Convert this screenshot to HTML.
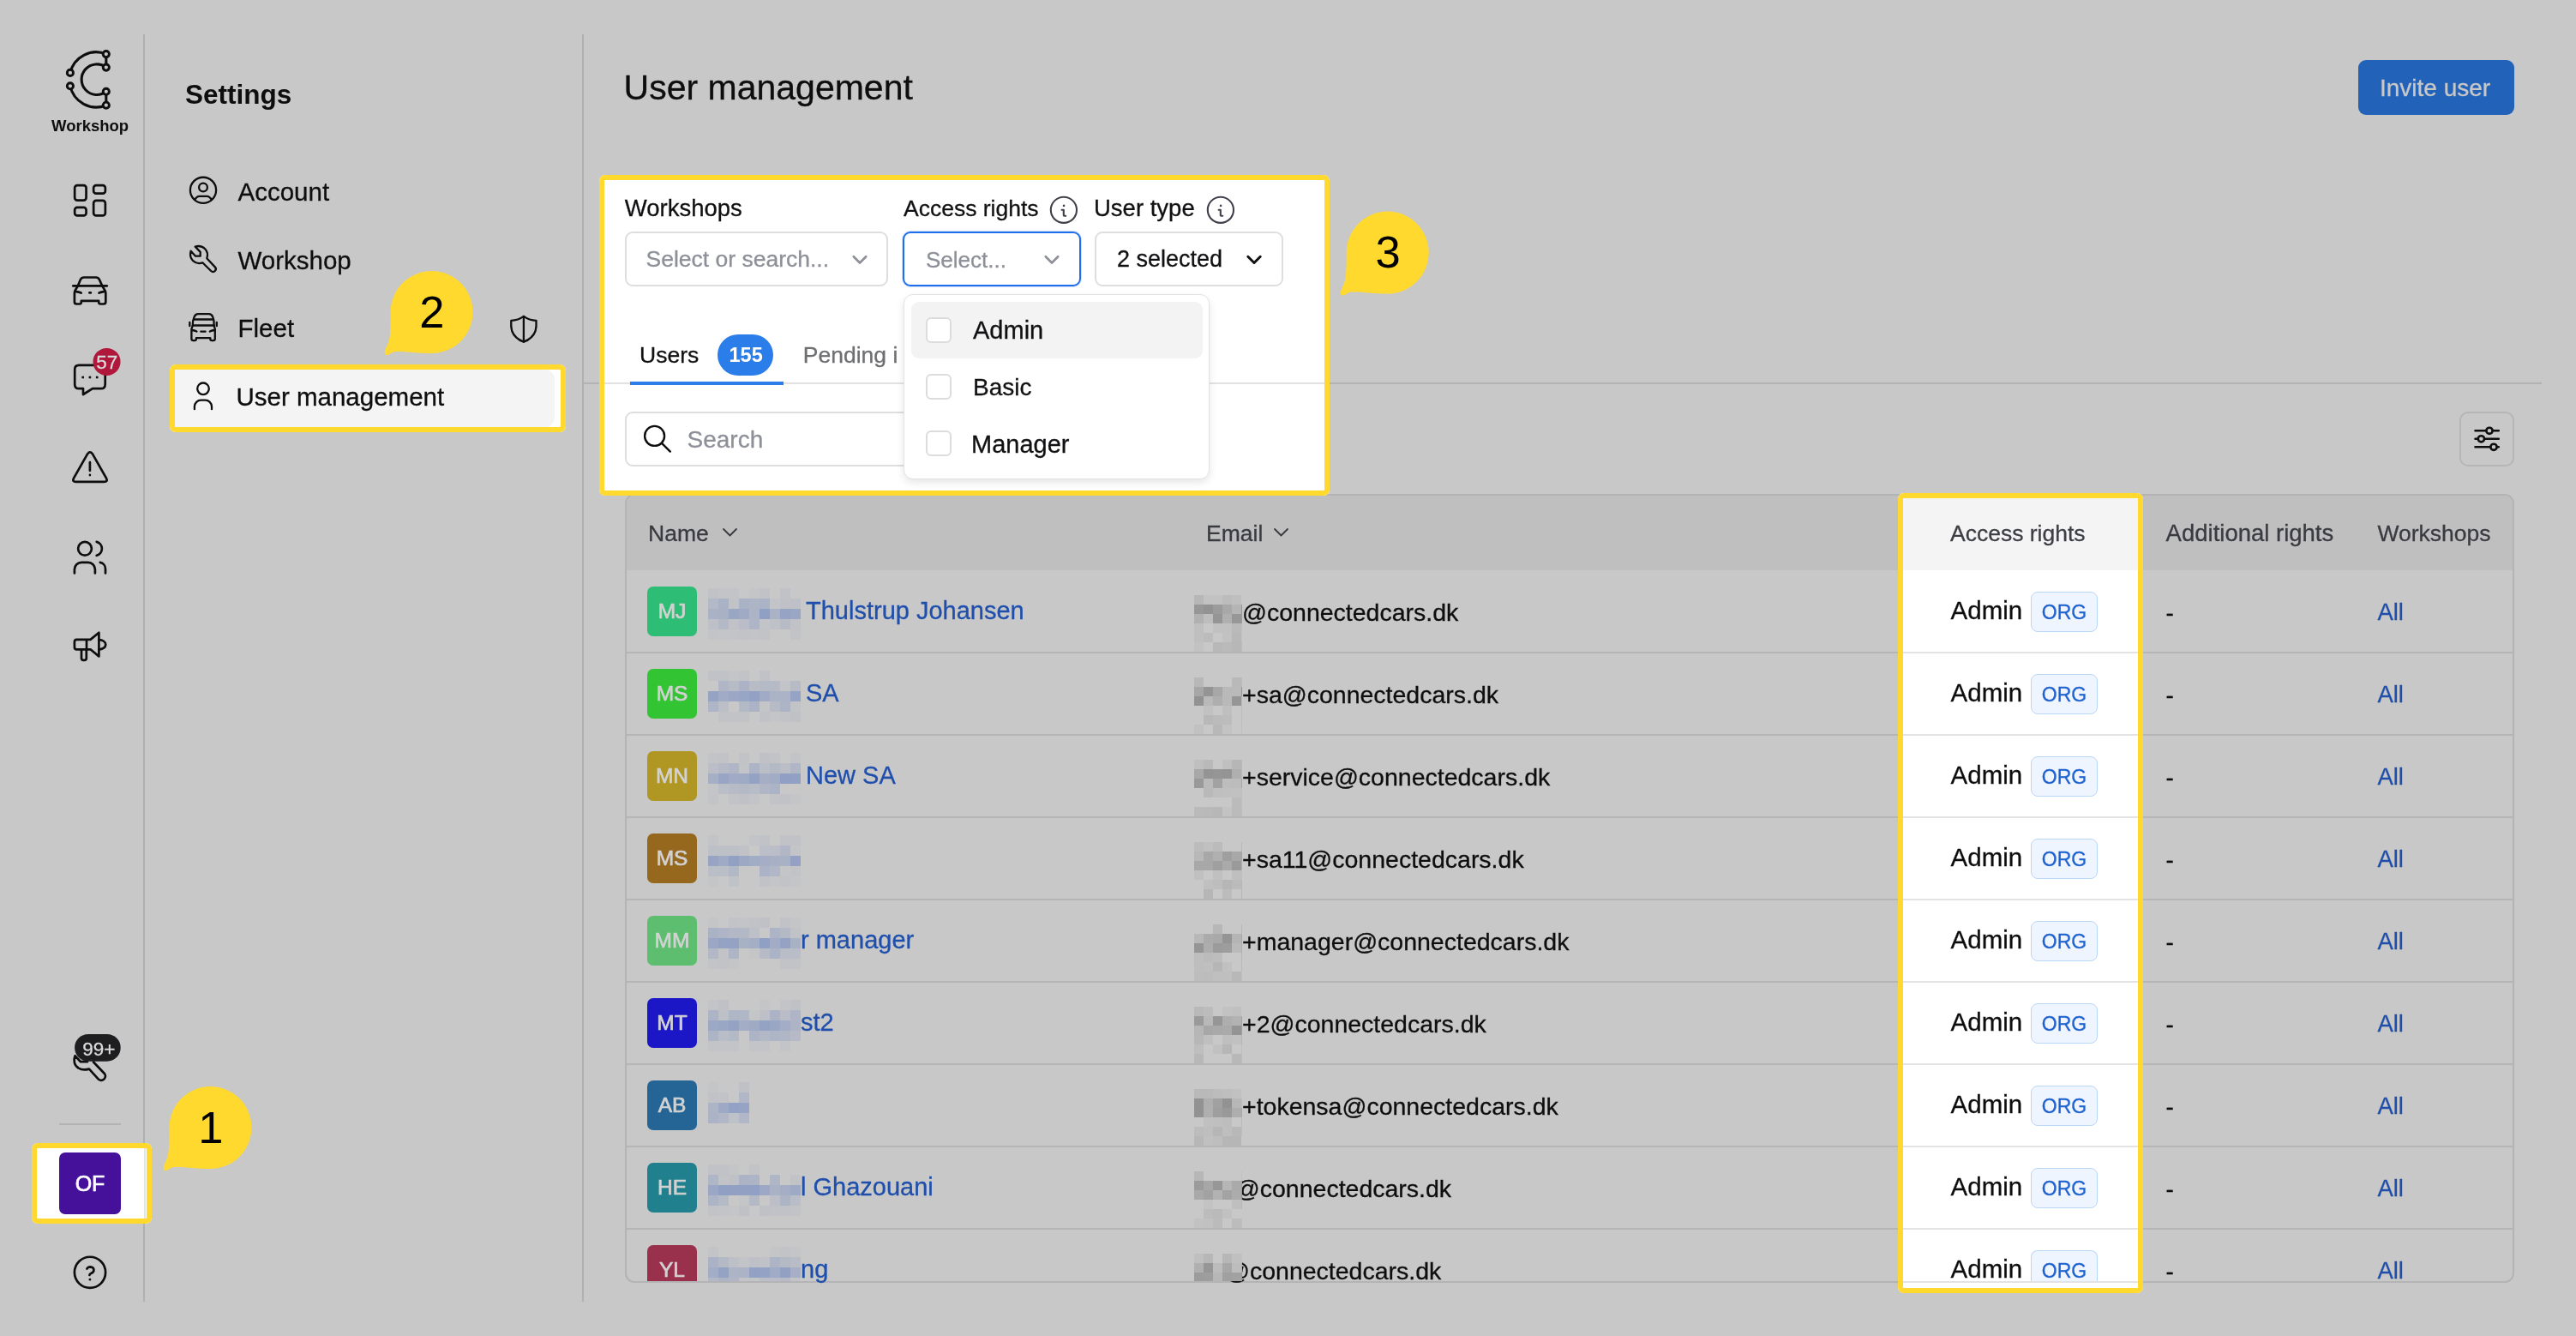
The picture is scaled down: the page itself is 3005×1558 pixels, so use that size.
<!DOCTYPE html>
<html><head><meta charset="utf-8"><title>User management</title>
<style>
html,body{margin:0;padding:0;width:3005px;height:1558px;overflow:hidden;background:#c8c8c8;}
body{position:relative;font-family:"Liberation Sans",sans-serif;}
.a{position:absolute;}
.t{position:absolute;white-space:nowrap;line-height:1;-webkit-text-stroke:0.3px currentColor;}
.s{position:absolute;overflow:visible;}
</style></head><body>
<div id="root" style="position:absolute;left:0;top:0;width:3005px;height:1558px;will-change:transform"><div class="a" style="left:167px;top:40px;width:2px;height:1478px;background:#b1b1b4"></div>
<div class="a" style="left:679px;top:40px;width:2px;height:1478px;background:#b1b1b4"></div>
<svg class="s" style="left:0px;top:0px" width="170" height="170" viewBox="0 0 170 170" ><g fill="none" stroke="#0e0e0f" stroke-width="3.1" stroke-linecap="round">
<path d="M81.9 84.9 A31 31 0 0 1 123.8 63.1"/>
<path d="M81.9 100.3 A31 31 0 0 0 123.8 122.7"/>
<path d="M123.8 78.6 A17.8 17.8 0 1 0 123.8 106.8"/>
<path d="M123.8 63.1 V78.6 M123.8 106.8 V122.7"/>
</g>
<g fill="#c8c8c8" stroke="#0e0e0f" stroke-width="2.9">
<circle cx="81.9" cy="84.9" r="3.6"/><circle cx="81.9" cy="100.3" r="3.6"/>
<circle cx="123.8" cy="63.1" r="3.6"/><circle cx="123.8" cy="78.6" r="3.6"/>
<circle cx="123.8" cy="106.8" r="3.6"/><circle cx="123.8" cy="122.7" r="3.6"/>
</g></svg>
<div class="t" style="left:60.0px;top:138.0px;font-size:18.5px;color:#0e0e0f;font-weight:700;-webkit-text-stroke:0">Workshop</div>
<svg class="s" style="left:75px;top:205px" width="60" height="60" viewBox="0 0 60 60" ><g fill="none" stroke="#0e0e0f" stroke-width="2.7" stroke-linecap="round" stroke-linejoin="round"><rect x="12.15" y="11.05" width="13.4" height="17.5" rx="3"/><rect x="34.15" y="11.05" width="13.7" height="9.6" rx="3"/><rect x="12.15" y="36.85" width="13.4" height="9.6" rx="3"/><rect x="34.15" y="28.95" width="13.7" height="17.5" rx="3"/></g></svg>
<svg class="s" style="left:75px;top:310px" width="60" height="60" viewBox="0 0 60 60" ><g fill="none" stroke="#0e0e0f" stroke-width="2.7" stroke-linecap="round" stroke-linejoin="round"><path d="M10.3 23.4 H49.7"/><path d="M15.8 23.4 L19 15.8 Q20.2 13.5 22.8 13.5 H37 Q39.6 13.5 40.8 15.8 L44.2 23.4"/><path d="M15.8 23.4 L12.8 28.5 Q11.9 30 11.9 32 V42 Q11.9 44.5 14.4 44.5 H17.6 Q19.8 44.5 19.8 42.3 V40.9 H40.2 V42.3 Q40.2 44.5 42.4 44.5 H45.8 Q48.3 44.5 48.3 42 V32 Q48.3 30 47.3 28.5 L44.2 23.4"/><path d="M14 30.2 Q17 30.4 19.6 31.6"/><path d="M46.2 30.2 Q43.2 30.4 40.6 31.6"/><path d="M29.4 31.4 H30.8"/></g></svg>
<svg class="s" style="left:75px;top:400px" width="70" height="70" viewBox="0 0 70 70" ><g fill="none" stroke="#0e0e0f" stroke-width="2.7" stroke-linecap="round" stroke-linejoin="round" stroke-width="3"><path d="M17.2 25.9 H42.7 Q47.7 25.9 47.7 30.9 V48.2 Q47.7 53.2 42.7 53.2 H33 L22 60 V53.2 H17.2 Q12.2 53.2 12.2 48.2 V30.9 Q12.2 25.9 17.2 25.9 Z"/></g><g fill="#0e0e0f"><rect x="20.4" y="38.7" width="2.6" height="2.6"/><rect x="28.6" y="38.7" width="2.6" height="2.6"/><rect x="36.9" y="38.7" width="2.6" height="2.6"/></g><circle cx="49.5" cy="21.9" r="16" fill="#b0173a"/></svg>
<div class="t" style="left:112.3px;top:412.2px;font-size:22.5px;color:#d6dcdc;font-weight:400;">57</div>
<svg class="s" style="left:75px;top:515px" width="60" height="60" viewBox="0 0 60 60" ><g fill="none" stroke="#0e0e0f" stroke-width="2.7" stroke-linecap="round" stroke-linejoin="round"><path d="M27.2 14.2 Q30 10.5 32.8 14.2 L49 42.6 Q51 46.9 46.5 46.9 H13.5 Q9 46.9 11 42.6 Z"/><path d="M29.9 24.2 V33.8"/><path d="M29.9 38.9 V39.1"/></g></svg>
<svg class="s" style="left:75px;top:620px" width="60" height="60" viewBox="0 0 60 60" ><g fill="none" stroke="#0e0e0f" stroke-width="2.7" stroke-linecap="round" stroke-linejoin="round"><circle cx="24" cy="19.8" r="7.9"/><path d="M37.7 11.9 A8.2 8.2 0 0 1 37.7 27.8"/><path d="M11.9 48.5 V44 A8.2 8.2 0 0 1 20.1 35.8 H27.7 A8.2 8.2 0 0 1 35.9 44 V48.5"/><path d="M41.8 35.9 A7.5 7.5 0 0 1 48 43.4 V48.5"/></g></svg>
<svg class="s" style="left:75px;top:725px" width="60" height="60" viewBox="0 0 60 60" ><g fill="none" stroke="#0e0e0f" stroke-width="2.7" stroke-linecap="round" stroke-linejoin="round"><path d="M26 20.9 H30.5 L40.4 12.8 V40.4 L30.5 32.3 H14.5 Q11.9 32.3 11.9 29.7 V23.5 Q11.9 20.9 14.5 20.9 H26 V32.3"/><path d="M20 32.3 V42.6 Q20 44.9 22.3 44.9 H23.5 Q25.8 44.9 25.8 42.6 V32.3"/><path d="M40.4 21.1 A7.9 5.6 0 0 1 40.4 32.3"/></g></svg>
<svg class="s" style="left:75px;top:1195px" width="80" height="80" viewBox="0 0 80 80" ><g fill="none" stroke="#0e0e0f" stroke-width="2.7" stroke-linecap="round" stroke-linejoin="round"><path d="M12.5 36.3 L19.1 43.2 H27 M12.5 36.3 C10.5 41.5 11.5 47.5 16.5 50.5 C19.5 52.5 24 53 29 51.6 L40.1 63.8 A4.85 4.85 0 0 0 46.9 57 L34 43.5"/></g><rect x="12.1" y="10.9" width="53.6" height="31.8" rx="15.9" fill="#1e1e20"/></svg>
<div class="t" style="left:96.3px;top:1213.2px;font-size:22.5px;color:#dcdcdc;font-weight:400;">99+</div>
<div class="a" style="left:69px;top:1310px;width:72px;height:2px;background:#b3b3b5"></div>
<div class="a" style="left:37px;top:1333px;width:140px;height:94px;background:#ffffff;border-radius:7px;box-shadow:inset 0 0 0 6px #ffd92e"></div>
<div class="a" style="left:168px;top:1339px;width:2px;height:82px;background:#e4e4e4"></div>
<div class="a" style="left:69px;top:1344px;width:72px;height:72px;background:#46119a;border-radius:7px"></div>
<div class="t" style="left:69.0px;top:1367.8px;font-size:25px;color:#ffffff;font-weight:400;width:72px;text-align:center;-webkit-text-stroke:0.7px #fff">OF</div>
<svg class="s" style="left:75px;top:1455px" width="60" height="60" viewBox="0 0 60 60" ><g fill="none" stroke="#0e0e0f" stroke-width="2.7" stroke-linecap="round" stroke-linejoin="round"><circle cx="30" cy="28.85" r="18.1"/><path d="M26.4 24.6 Q27.6 22.4 30.4 22.4 Q34.4 22.6 34.4 26.2 Q34.4 28.6 31.6 29.8 Q29.4 30.8 29.4 32"/><path d="M29.9 37 V37.2"/></g></svg>
<div class="t" style="left:216.0px;top:95.3px;font-size:31.5px;color:#0e0e0f;font-weight:700;-webkit-text-stroke:0">Settings</div>
<svg class="s" style="left:210px;top:195px" width="55" height="55" viewBox="0 0 55 55" ><g fill="none" stroke="#0e0e0f" stroke-width="2.3" stroke-linecap="round" stroke-linejoin="round"><circle cx="27" cy="26.85" r="15.1"/><circle cx="27" cy="23.5" r="4.9"/><path d="M17.1 37.6 L19.6 35 Q21 33.8 22.8 33.8 H31.2 Q33 33.8 34.4 35 L36.9 37.6"/></g></svg>
<div class="t" style="left:277.5px;top:209.0px;font-size:29.5px;color:#0e0e0f;font-weight:400;">Account</div>
<svg class="s" style="left:210px;top:275px" width="55" height="55" viewBox="0 0 55 55" ><g fill="none" stroke="#0e0e0f" stroke-width="2.3" stroke-linecap="round" stroke-linejoin="round"><path d="M17.7 12.6 L23.7 18.9 V23.7 H18.1 L12.6 17.7 Q10.6 24.5 15.2 29.2 Q19.8 33.5 26.3 31.3 L36.2 41 Q38.6 43.2 40.8 41 Q43 38.8 40.8 36.4 L31.3 26.3 Q33.5 19.8 29.2 15.2 Q24.5 10.6 17.7 12.6 Z"/></g></svg>
<div class="t" style="left:277.5px;top:289.0px;font-size:29.5px;color:#0e0e0f;font-weight:400;">Workshop</div>
<svg class="s" style="left:210px;top:355px" width="55" height="55" viewBox="0 0 55 55" ><g fill="none" stroke="#0e0e0f" stroke-width="2.3" stroke-linecap="round" stroke-linejoin="round"><path d="M16.5 17.5 H38.3 M15.2 24.5 H39.5"/><path d="M14.8 24.5 Q14.6 19 16.6 14.5 Q18 11.1 21 11.1 H33.8 Q36.8 11.1 38.2 14.5 Q40.2 19 39.6 24.5"/><path d="M11.3 20.8 V25.2 M42.8 20.8 V25.2"/><path d="M14.8 24.5 L13.4 28.6 V40 Q13.4 42.1 15.5 42.1 H17 Q18.9 42.1 18.9 40.2 V39.1 H35.3 V40.2 Q35.3 42.1 37.2 42.1 H38.7 Q40.8 42.1 40.8 40 V28.6 L39.6 24.5"/><path d="M14 30 Q17 30.3 19.4 31.6 M40.2 30 Q37.2 30.3 34.8 31.6 M24.3 31.7 H29.6"/></g></svg>
<div class="t" style="left:277.5px;top:368.0px;font-size:29.5px;color:#0e0e0f;font-weight:400;">Fleet</div>
<svg class="s" style="left:585px;top:357px" width="55" height="55" viewBox="0 0 55 55" ><g fill="none" stroke="#0e0e0f" stroke-width="2.3" stroke-linecap="round" stroke-linejoin="round"><path d="M25.9 11.9 Q19.5 16.5 11.3 16.9 Q10.8 24 12.2 29 Q15.5 37.8 25.9 41.7 Q36.3 37.8 39.6 29 Q41 24 40.5 16.9 Q32.3 16.5 25.9 11.9 Z"/><path d="M25.9 11.9 V41.7"/></g></svg>
<div class="a" style="left:198px;top:425px;width:462px;height:79px;background:#ffffff;border-radius:7px;box-shadow:inset 0 0 0 6px #ffd92e"></div>
<div class="a" style="left:204px;top:431px;width:443px;height:67px;background:#f4f4f4;border-radius:0 11px 11px 0"></div>
<svg class="s" style="left:210px;top:435px" width="55" height="55" viewBox="0 0 55 55" ><g fill="none" stroke="#0e0e0f" stroke-width="2.3" stroke-linecap="round" stroke-linejoin="round"><circle cx="27" cy="18.3" r="6.8"/><path d="M16.9 42.2 V39 A7.5 7.5 0 0 1 24.4 31.7 H29.5 A7.5 7.5 0 0 1 37 39 V42.2"/></g></svg>
<div class="t" style="left:275.5px;top:448.0px;font-size:29.5px;color:#0e0e0f;font-weight:400;">User management</div>
<div class="a" style="left:2869px;top:480px;width:64px;height:64px;border:2px solid #b6b6b8;border-radius:10px;box-sizing:border-box"></div>
<svg class="s" style="left:2820px;top:430px" width="185" height="170" viewBox="0 0 185 170" ><g fill="none" stroke="#0e0e0f" stroke-width="2.6" stroke-linecap="round"><path d="M67.5 72.3 H94.8 M67.5 81.8 H94.8 M67.5 91.3 H94.8"/></g><g fill="#c8c8c8" stroke="#0e0e0f" stroke-width="2.6"><circle cx="84" cy="72.3" r="3.6"/><circle cx="74.4" cy="81.8" r="3.6"/><circle cx="89" cy="91.3" r="3.6"/></g></svg>
<div class="a" style="left:729px;top:576px;width:2204px;height:920px;border:2px solid #b4b4b6;border-radius:11px;box-sizing:border-box;overflow:hidden"></div>
<div class="a" style="left:731px;top:578px;width:2200px;height:87px;background:#bfbfc0;border-radius:9px 9px 0 0"></div>
<div class="t" style="left:756.0px;top:608.9px;font-size:26.5px;color:#3a3b40;font-weight:400;">Name</div>
<svg class="s" style="left:841px;top:613px" width="24" height="16" viewBox="0 0 24 16" ><path d="M3 4 L10.5 11.5 L18 4" fill="none" stroke="#3a3b40" stroke-width="1.8" stroke-linecap="round" stroke-linejoin="round"/></svg>
<div class="t" style="left:1407.0px;top:608.6px;font-size:26.5px;color:#3a3b40;font-weight:400;">Email</div>
<svg class="s" style="left:1484px;top:613px" width="24" height="16" viewBox="0 0 24 16" ><path d="M3 4 L10.5 11.5 L18 4" fill="none" stroke="#3a3b40" stroke-width="1.8" stroke-linecap="round" stroke-linejoin="round"/></svg>
<div class="t" style="left:2526.6px;top:607.7px;font-size:27.5px;color:#3a3b40;font-weight:400;">Additional rights</div>
<div class="t" style="left:2773.4px;top:608.6px;font-size:26.5px;color:#3a3b40;font-weight:400;">Workshops</div>
<div class="a" style="left:755px;top:684px;width:58px;height:58px;background:#2ebd74;border-radius:7px"></div>
<div class="t" style="left:755.0px;top:701.1px;font-size:24.5px;color:#d2d2d2;font-weight:400;width:58px;text-align:center;-webkit-text-stroke:0.7px #d2d2d2">MJ</div>
<div class="a" style="left:826px;top:686px;width:12px;height:12px;background:rgb(193,194,199)"></div>
<div class="a" style="left:826px;top:698px;width:12px;height:12px;background:rgb(179,185,198)"></div>
<div class="a" style="left:826px;top:710px;width:12px;height:12px;background:rgb(170,178,198)"></div>
<div class="a" style="left:826px;top:722px;width:12px;height:12px;background:rgb(189,192,199)"></div>
<div class="a" style="left:826px;top:734px;width:12px;height:12px;background:rgb(195,196,199)"></div>
<div class="a" style="left:838px;top:686px;width:12px;height:12px;background:rgb(195,196,199)"></div>
<div class="a" style="left:838px;top:698px;width:12px;height:12px;background:rgb(170,178,198)"></div>
<div class="a" style="left:838px;top:710px;width:12px;height:12px;background:rgb(169,177,197)"></div>
<div class="a" style="left:838px;top:722px;width:12px;height:12px;background:rgb(179,185,198)"></div>
<div class="a" style="left:838px;top:734px;width:12px;height:12px;background:rgb(196,197,199)"></div>
<div class="a" style="left:850px;top:686px;width:12px;height:12px;background:rgb(195,196,199)"></div>
<div class="a" style="left:850px;top:698px;width:12px;height:12px;background:rgb(193,195,199)"></div>
<div class="a" style="left:850px;top:710px;width:12px;height:12px;background:rgb(153,166,196)"></div>
<div class="a" style="left:850px;top:722px;width:12px;height:12px;background:rgb(193,194,199)"></div>
<div class="a" style="left:850px;top:734px;width:12px;height:12px;background:rgb(195,196,199)"></div>
<div class="a" style="left:862px;top:698px;width:12px;height:12px;background:rgb(170,178,198)"></div>
<div class="a" style="left:862px;top:710px;width:12px;height:12px;background:rgb(159,170,197)"></div>
<div class="a" style="left:862px;top:722px;width:12px;height:12px;background:rgb(186,189,199)"></div>
<div class="a" style="left:862px;top:734px;width:12px;height:12px;background:rgb(193,195,199)"></div>
<div class="a" style="left:874px;top:686px;width:12px;height:12px;background:rgb(196,197,199)"></div>
<div class="a" style="left:874px;top:698px;width:12px;height:12px;background:rgb(173,180,198)"></div>
<div class="a" style="left:874px;top:710px;width:12px;height:12px;background:rgb(173,180,198)"></div>
<div class="a" style="left:874px;top:722px;width:12px;height:12px;background:rgb(174,181,198)"></div>
<div class="a" style="left:874px;top:734px;width:12px;height:12px;background:rgb(195,196,199)"></div>
<div class="a" style="left:886px;top:686px;width:12px;height:12px;background:rgb(192,194,199)"></div>
<div class="a" style="left:886px;top:698px;width:12px;height:12px;background:rgb(171,179,198)"></div>
<div class="a" style="left:886px;top:710px;width:12px;height:12px;background:rgb(144,159,196)"></div>
<div class="a" style="left:886px;top:722px;width:12px;height:12px;background:rgb(194,196,199)"></div>
<div class="a" style="left:886px;top:734px;width:12px;height:12px;background:rgb(193,195,199)"></div>
<div class="a" style="left:898px;top:698px;width:12px;height:12px;background:rgb(195,196,199)"></div>
<div class="a" style="left:898px;top:710px;width:12px;height:12px;background:rgb(170,178,198)"></div>
<div class="a" style="left:898px;top:722px;width:12px;height:12px;background:rgb(190,193,199)"></div>
<div class="a" style="left:910px;top:686px;width:12px;height:12px;background:rgb(192,194,199)"></div>
<div class="a" style="left:910px;top:698px;width:12px;height:12px;background:rgb(191,193,199)"></div>
<div class="a" style="left:910px;top:710px;width:12px;height:12px;background:rgb(150,163,196)"></div>
<div class="a" style="left:910px;top:722px;width:12px;height:12px;background:rgb(183,187,198)"></div>
<div class="a" style="left:922px;top:698px;width:12px;height:12px;background:rgb(190,192,199)"></div>
<div class="a" style="left:922px;top:710px;width:12px;height:12px;background:rgb(153,166,196)"></div>
<div class="a" style="left:922px;top:722px;width:12px;height:12px;background:rgb(193,194,199)"></div>
<div class="a" style="left:922px;top:734px;width:12px;height:12px;background:rgb(194,195,199)"></div>
<div class="t" style="left:940.0px;top:697.7px;font-size:29px;color:#1f4fab;font-weight:400;">Thulstrup Johansen</div>
<div class="t" style="left:1449.0px;top:699.6px;font-size:28.5px;color:#0e0e0f;font-weight:400;">@connectedcars.dk</div>
<div class="a" style="left:1393px;top:694px;width:11px;height:11px;background:rgb(183,183,183)"></div>
<div class="a" style="left:1393px;top:705px;width:11px;height:11px;background:rgb(151,151,151)"></div>
<div class="a" style="left:1393px;top:716px;width:11px;height:11px;background:rgb(177,177,177)"></div>
<div class="a" style="left:1393px;top:727px;width:11px;height:11px;background:rgb(191,191,191)"></div>
<div class="a" style="left:1393px;top:738px;width:11px;height:11px;background:rgb(191,191,191)"></div>
<div class="a" style="left:1393px;top:749px;width:11px;height:11px;background:rgb(194,194,194)"></div>
<div class="a" style="left:1404px;top:694px;width:11px;height:11px;background:rgb(194,194,194)"></div>
<div class="a" style="left:1404px;top:705px;width:11px;height:11px;background:rgb(146,146,146)"></div>
<div class="a" style="left:1404px;top:716px;width:11px;height:11px;background:rgb(190,190,190)"></div>
<div class="a" style="left:1404px;top:738px;width:11px;height:11px;background:rgb(188,188,188)"></div>
<div class="a" style="left:1415px;top:694px;width:11px;height:11px;background:rgb(194,194,194)"></div>
<div class="a" style="left:1415px;top:705px;width:11px;height:11px;background:rgb(155,155,155)"></div>
<div class="a" style="left:1415px;top:716px;width:11px;height:11px;background:rgb(149,149,149)"></div>
<div class="a" style="left:1415px;top:727px;width:11px;height:11px;background:rgb(193,193,193)"></div>
<div class="a" style="left:1415px;top:749px;width:11px;height:11px;background:rgb(184,184,184)"></div>
<div class="a" style="left:1426px;top:694px;width:11px;height:11px;background:rgb(188,188,188)"></div>
<div class="a" style="left:1426px;top:705px;width:11px;height:11px;background:rgb(168,168,168)"></div>
<div class="a" style="left:1426px;top:716px;width:11px;height:11px;background:rgb(176,176,176)"></div>
<div class="a" style="left:1426px;top:727px;width:11px;height:11px;background:rgb(193,193,193)"></div>
<div class="a" style="left:1426px;top:738px;width:11px;height:11px;background:rgb(194,194,194)"></div>
<div class="a" style="left:1426px;top:749px;width:11px;height:11px;background:rgb(186,186,186)"></div>
<div class="a" style="left:1437px;top:694px;width:11px;height:11px;background:rgb(191,191,191)"></div>
<div class="a" style="left:1437px;top:705px;width:11px;height:11px;background:rgb(181,181,181)"></div>
<div class="a" style="left:1437px;top:716px;width:11px;height:11px;background:rgb(151,151,151)"></div>
<div class="a" style="left:1437px;top:727px;width:11px;height:11px;background:rgb(186,186,186)"></div>
<div class="a" style="left:1437px;top:738px;width:11px;height:11px;background:rgb(184,184,184)"></div>
<div class="a" style="left:1437px;top:749px;width:11px;height:11px;background:rgb(183,183,183)"></div>
<div class="a" style="left:1448px;top:705px;width:1px;height:11px;background:rgb(150,150,150)"></div>
<div class="a" style="left:1448px;top:716px;width:1px;height:11px;background:rgb(156,156,156)"></div>
<div class="a" style="left:1448px;top:727px;width:1px;height:11px;background:rgb(192,192,192)"></div>
<div class="a" style="left:1448px;top:738px;width:1px;height:11px;background:rgb(194,194,194)"></div>
<div class="a" style="left:1448px;top:749px;width:1px;height:11px;background:rgb(189,189,189)"></div>
<div class="t" style="left:2526.6px;top:700.5px;font-size:28px;color:#0e0e0f;font-weight:400;">-</div>
<div class="t" style="left:2773.4px;top:699.9px;font-size:27.5px;color:#1f4fab;font-weight:400;">All</div>
<div class="a" style="left:731px;top:760px;width:2200px;height:2px;background:#b5b5b7"></div>
<div class="a" style="left:755px;top:780px;width:58px;height:58px;background:#33c433;border-radius:7px"></div>
<div class="t" style="left:755.0px;top:797.1px;font-size:24.5px;color:#d2d2d2;font-weight:400;width:58px;text-align:center;-webkit-text-stroke:0.7px #d2d2d2">MS</div>
<div class="a" style="left:826px;top:782px;width:12px;height:12px;background:rgb(192,194,199)"></div>
<div class="a" style="left:826px;top:806px;width:12px;height:12px;background:rgb(150,164,196)"></div>
<div class="a" style="left:826px;top:818px;width:12px;height:12px;background:rgb(174,181,198)"></div>
<div class="a" style="left:838px;top:782px;width:12px;height:12px;background:rgb(191,194,199)"></div>
<div class="a" style="left:838px;top:794px;width:12px;height:12px;background:rgb(176,182,198)"></div>
<div class="a" style="left:838px;top:806px;width:12px;height:12px;background:rgb(161,171,197)"></div>
<div class="a" style="left:838px;top:818px;width:12px;height:12px;background:rgb(188,191,199)"></div>
<div class="a" style="left:838px;top:830px;width:12px;height:12px;background:rgb(194,195,199)"></div>
<div class="a" style="left:850px;top:782px;width:12px;height:12px;background:rgb(196,197,199)"></div>
<div class="a" style="left:850px;top:794px;width:12px;height:12px;background:rgb(182,187,198)"></div>
<div class="a" style="left:850px;top:806px;width:12px;height:12px;background:rgb(155,167,197)"></div>
<div class="a" style="left:850px;top:830px;width:12px;height:12px;background:rgb(193,195,199)"></div>
<div class="a" style="left:862px;top:782px;width:12px;height:12px;background:rgb(193,195,199)"></div>
<div class="a" style="left:862px;top:794px;width:12px;height:12px;background:rgb(172,179,198)"></div>
<div class="a" style="left:862px;top:806px;width:12px;height:12px;background:rgb(152,165,196)"></div>
<div class="a" style="left:862px;top:818px;width:12px;height:12px;background:rgb(180,185,198)"></div>
<div class="a" style="left:862px;top:830px;width:12px;height:12px;background:rgb(193,195,199)"></div>
<div class="a" style="left:874px;top:794px;width:12px;height:12px;background:rgb(184,188,198)"></div>
<div class="a" style="left:874px;top:806px;width:12px;height:12px;background:rgb(146,161,196)"></div>
<div class="a" style="left:874px;top:818px;width:12px;height:12px;background:rgb(172,179,198)"></div>
<div class="a" style="left:886px;top:782px;width:12px;height:12px;background:rgb(192,194,199)"></div>
<div class="a" style="left:886px;top:794px;width:12px;height:12px;background:rgb(180,186,198)"></div>
<div class="a" style="left:886px;top:806px;width:12px;height:12px;background:rgb(161,171,197)"></div>
<div class="a" style="left:886px;top:818px;width:12px;height:12px;background:rgb(196,197,199)"></div>
<div class="a" style="left:886px;top:830px;width:12px;height:12px;background:rgb(192,194,199)"></div>
<div class="a" style="left:898px;top:794px;width:12px;height:12px;background:rgb(182,186,198)"></div>
<div class="a" style="left:898px;top:806px;width:12px;height:12px;background:rgb(171,179,198)"></div>
<div class="a" style="left:898px;top:818px;width:12px;height:12px;background:rgb(183,187,198)"></div>
<div class="a" style="left:898px;top:830px;width:12px;height:12px;background:rgb(196,197,199)"></div>
<div class="a" style="left:910px;top:794px;width:12px;height:12px;background:rgb(195,196,199)"></div>
<div class="a" style="left:910px;top:806px;width:12px;height:12px;background:rgb(172,179,198)"></div>
<div class="a" style="left:910px;top:818px;width:12px;height:12px;background:rgb(173,180,198)"></div>
<div class="a" style="left:910px;top:830px;width:12px;height:12px;background:rgb(194,195,199)"></div>
<div class="a" style="left:922px;top:794px;width:12px;height:12px;background:rgb(182,187,198)"></div>
<div class="a" style="left:922px;top:806px;width:12px;height:12px;background:rgb(150,163,196)"></div>
<div class="a" style="left:922px;top:818px;width:12px;height:12px;background:rgb(193,195,199)"></div>
<div class="a" style="left:922px;top:830px;width:12px;height:12px;background:rgb(191,193,199)"></div>
<div class="t" style="left:940.0px;top:793.7px;font-size:29px;color:#1f4fab;font-weight:400;">SA</div>
<div class="t" style="left:1449.0px;top:795.6px;font-size:28.5px;color:#0e0e0f;font-weight:400;">+sa@connectedcars.dk</div>
<div class="a" style="left:1393px;top:790px;width:11px;height:11px;background:rgb(184,184,184)"></div>
<div class="a" style="left:1393px;top:801px;width:11px;height:11px;background:rgb(166,166,166)"></div>
<div class="a" style="left:1393px;top:812px;width:11px;height:11px;background:rgb(146,146,146)"></div>
<div class="a" style="left:1393px;top:845px;width:11px;height:11px;background:rgb(193,193,193)"></div>
<div class="a" style="left:1404px;top:801px;width:11px;height:11px;background:rgb(148,148,148)"></div>
<div class="a" style="left:1404px;top:812px;width:11px;height:11px;background:rgb(185,185,185)"></div>
<div class="a" style="left:1404px;top:823px;width:11px;height:11px;background:rgb(193,193,193)"></div>
<div class="a" style="left:1404px;top:834px;width:11px;height:11px;background:rgb(184,184,184)"></div>
<div class="a" style="left:1415px;top:801px;width:11px;height:11px;background:rgb(167,167,167)"></div>
<div class="a" style="left:1415px;top:812px;width:11px;height:11px;background:rgb(174,174,174)"></div>
<div class="a" style="left:1415px;top:834px;width:11px;height:11px;background:rgb(187,187,187)"></div>
<div class="a" style="left:1415px;top:845px;width:11px;height:11px;background:rgb(184,184,184)"></div>
<div class="a" style="left:1426px;top:801px;width:11px;height:11px;background:rgb(185,185,185)"></div>
<div class="a" style="left:1426px;top:812px;width:11px;height:11px;background:rgb(185,185,185)"></div>
<div class="a" style="left:1426px;top:823px;width:11px;height:11px;background:rgb(191,191,191)"></div>
<div class="a" style="left:1426px;top:834px;width:11px;height:11px;background:rgb(188,188,188)"></div>
<div class="a" style="left:1426px;top:845px;width:11px;height:11px;background:rgb(195,195,195)"></div>
<div class="a" style="left:1437px;top:790px;width:11px;height:11px;background:rgb(185,185,185)"></div>
<div class="a" style="left:1437px;top:801px;width:11px;height:11px;background:rgb(186,186,186)"></div>
<div class="a" style="left:1437px;top:812px;width:11px;height:11px;background:rgb(150,150,150)"></div>
<div class="a" style="left:1448px;top:790px;width:1px;height:11px;background:rgb(189,189,189)"></div>
<div class="a" style="left:1448px;top:801px;width:1px;height:11px;background:rgb(150,150,150)"></div>
<div class="a" style="left:1448px;top:812px;width:1px;height:11px;background:rgb(186,186,186)"></div>
<div class="a" style="left:1448px;top:823px;width:1px;height:11px;background:rgb(189,189,189)"></div>
<div class="a" style="left:1448px;top:834px;width:1px;height:11px;background:rgb(190,190,190)"></div>
<div class="a" style="left:1448px;top:845px;width:1px;height:11px;background:rgb(191,191,191)"></div>
<div class="t" style="left:2526.6px;top:796.5px;font-size:28px;color:#0e0e0f;font-weight:400;">-</div>
<div class="t" style="left:2773.4px;top:795.9px;font-size:27.5px;color:#1f4fab;font-weight:400;">All</div>
<div class="a" style="left:731px;top:856px;width:2200px;height:2px;background:#b5b5b7"></div>
<div class="a" style="left:755px;top:876px;width:58px;height:58px;background:#b09623;border-radius:7px"></div>
<div class="t" style="left:755.0px;top:893.1px;font-size:24.5px;color:#d2d2d2;font-weight:400;width:58px;text-align:center;-webkit-text-stroke:0.7px #d2d2d2">MN</div>
<div class="a" style="left:826px;top:878px;width:12px;height:12px;background:rgb(195,196,199)"></div>
<div class="a" style="left:826px;top:890px;width:12px;height:12px;background:rgb(187,190,199)"></div>
<div class="a" style="left:826px;top:902px;width:12px;height:12px;background:rgb(167,175,197)"></div>
<div class="a" style="left:826px;top:914px;width:12px;height:12px;background:rgb(196,197,199)"></div>
<div class="a" style="left:826px;top:926px;width:12px;height:12px;background:rgb(195,196,199)"></div>
<div class="a" style="left:838px;top:878px;width:12px;height:12px;background:rgb(194,195,199)"></div>
<div class="a" style="left:838px;top:890px;width:12px;height:12px;background:rgb(181,186,198)"></div>
<div class="a" style="left:838px;top:902px;width:12px;height:12px;background:rgb(152,165,196)"></div>
<div class="a" style="left:838px;top:914px;width:12px;height:12px;background:rgb(186,190,199)"></div>
<div class="a" style="left:850px;top:890px;width:12px;height:12px;background:rgb(176,182,198)"></div>
<div class="a" style="left:850px;top:902px;width:12px;height:12px;background:rgb(161,171,197)"></div>
<div class="a" style="left:850px;top:914px;width:12px;height:12px;background:rgb(183,187,198)"></div>
<div class="a" style="left:850px;top:926px;width:12px;height:12px;background:rgb(193,195,199)"></div>
<div class="a" style="left:862px;top:878px;width:12px;height:12px;background:rgb(193,195,199)"></div>
<div class="a" style="left:862px;top:890px;width:12px;height:12px;background:rgb(195,196,199)"></div>
<div class="a" style="left:862px;top:902px;width:12px;height:12px;background:rgb(159,170,197)"></div>
<div class="a" style="left:862px;top:914px;width:12px;height:12px;background:rgb(180,185,198)"></div>
<div class="a" style="left:862px;top:926px;width:12px;height:12px;background:rgb(191,193,199)"></div>
<div class="a" style="left:874px;top:890px;width:12px;height:12px;background:rgb(172,180,198)"></div>
<div class="a" style="left:874px;top:902px;width:12px;height:12px;background:rgb(148,162,196)"></div>
<div class="a" style="left:874px;top:914px;width:12px;height:12px;background:rgb(184,188,198)"></div>
<div class="a" style="left:874px;top:926px;width:12px;height:12px;background:rgb(194,196,199)"></div>
<div class="a" style="left:886px;top:878px;width:12px;height:12px;background:rgb(191,193,199)"></div>
<div class="a" style="left:886px;top:890px;width:12px;height:12px;background:rgb(186,190,199)"></div>
<div class="a" style="left:886px;top:902px;width:12px;height:12px;background:rgb(165,174,197)"></div>
<div class="a" style="left:886px;top:914px;width:12px;height:12px;background:rgb(176,182,198)"></div>
<div class="a" style="left:898px;top:878px;width:12px;height:12px;background:rgb(193,195,199)"></div>
<div class="a" style="left:898px;top:890px;width:12px;height:12px;background:rgb(180,185,198)"></div>
<div class="a" style="left:898px;top:902px;width:12px;height:12px;background:rgb(162,172,197)"></div>
<div class="a" style="left:898px;top:914px;width:12px;height:12px;background:rgb(171,179,198)"></div>
<div class="a" style="left:898px;top:926px;width:12px;height:12px;background:rgb(194,195,199)"></div>
<div class="a" style="left:910px;top:890px;width:12px;height:12px;background:rgb(187,190,199)"></div>
<div class="a" style="left:910px;top:902px;width:12px;height:12px;background:rgb(145,159,196)"></div>
<div class="a" style="left:910px;top:926px;width:12px;height:12px;background:rgb(192,194,199)"></div>
<div class="a" style="left:922px;top:878px;width:12px;height:12px;background:rgb(195,196,199)"></div>
<div class="a" style="left:922px;top:890px;width:12px;height:12px;background:rgb(176,182,198)"></div>
<div class="a" style="left:922px;top:902px;width:12px;height:12px;background:rgb(146,160,196)"></div>
<div class="a" style="left:922px;top:926px;width:12px;height:12px;background:rgb(196,197,199)"></div>
<div class="t" style="left:940.0px;top:889.7px;font-size:29px;color:#1f4fab;font-weight:400;">New SA</div>
<div class="t" style="left:1449.0px;top:891.6px;font-size:28.5px;color:#0e0e0f;font-weight:400;">+service@connectedcars.dk</div>
<div class="a" style="left:1393px;top:886px;width:11px;height:11px;background:rgb(191,191,191)"></div>
<div class="a" style="left:1393px;top:897px;width:11px;height:11px;background:rgb(168,168,168)"></div>
<div class="a" style="left:1393px;top:908px;width:11px;height:11px;background:rgb(153,153,153)"></div>
<div class="a" style="left:1393px;top:941px;width:11px;height:11px;background:rgb(186,186,186)"></div>
<div class="a" style="left:1404px;top:886px;width:11px;height:11px;background:rgb(185,185,185)"></div>
<div class="a" style="left:1404px;top:897px;width:11px;height:11px;background:rgb(148,148,148)"></div>
<div class="a" style="left:1404px;top:908px;width:11px;height:11px;background:rgb(186,186,186)"></div>
<div class="a" style="left:1404px;top:919px;width:11px;height:11px;background:rgb(185,185,185)"></div>
<div class="a" style="left:1404px;top:941px;width:11px;height:11px;background:rgb(185,185,185)"></div>
<div class="a" style="left:1415px;top:897px;width:11px;height:11px;background:rgb(149,149,149)"></div>
<div class="a" style="left:1415px;top:908px;width:11px;height:11px;background:rgb(162,162,162)"></div>
<div class="a" style="left:1415px;top:919px;width:11px;height:11px;background:rgb(191,191,191)"></div>
<div class="a" style="left:1415px;top:941px;width:11px;height:11px;background:rgb(183,183,183)"></div>
<div class="a" style="left:1426px;top:886px;width:11px;height:11px;background:rgb(192,192,192)"></div>
<div class="a" style="left:1426px;top:897px;width:11px;height:11px;background:rgb(148,148,148)"></div>
<div class="a" style="left:1426px;top:908px;width:11px;height:11px;background:rgb(189,189,189)"></div>
<div class="a" style="left:1426px;top:919px;width:11px;height:11px;background:rgb(192,192,192)"></div>
<div class="a" style="left:1426px;top:941px;width:11px;height:11px;background:rgb(195,195,195)"></div>
<div class="a" style="left:1437px;top:886px;width:11px;height:11px;background:rgb(182,182,182)"></div>
<div class="a" style="left:1437px;top:897px;width:11px;height:11px;background:rgb(175,175,175)"></div>
<div class="a" style="left:1437px;top:908px;width:11px;height:11px;background:rgb(188,188,188)"></div>
<div class="a" style="left:1437px;top:919px;width:11px;height:11px;background:rgb(193,193,193)"></div>
<div class="a" style="left:1437px;top:930px;width:11px;height:11px;background:rgb(187,187,187)"></div>
<div class="a" style="left:1437px;top:941px;width:11px;height:11px;background:rgb(187,187,187)"></div>
<div class="a" style="left:1448px;top:886px;width:1px;height:11px;background:rgb(185,185,185)"></div>
<div class="a" style="left:1448px;top:897px;width:1px;height:11px;background:rgb(185,185,185)"></div>
<div class="a" style="left:1448px;top:908px;width:1px;height:11px;background:rgb(167,167,167)"></div>
<div class="a" style="left:1448px;top:919px;width:1px;height:11px;background:rgb(192,192,192)"></div>
<div class="a" style="left:1448px;top:930px;width:1px;height:11px;background:rgb(192,192,192)"></div>
<div class="a" style="left:1448px;top:941px;width:1px;height:11px;background:rgb(189,189,189)"></div>
<div class="t" style="left:2526.6px;top:892.5px;font-size:28px;color:#0e0e0f;font-weight:400;">-</div>
<div class="t" style="left:2773.4px;top:891.9px;font-size:27.5px;color:#1f4fab;font-weight:400;">All</div>
<div class="a" style="left:731px;top:952px;width:2200px;height:2px;background:#b5b5b7"></div>
<div class="a" style="left:755px;top:972px;width:58px;height:58px;background:#96681e;border-radius:7px"></div>
<div class="t" style="left:755.0px;top:989.1px;font-size:24.5px;color:#d2d2d2;font-weight:400;width:58px;text-align:center;-webkit-text-stroke:0.7px #d2d2d2">MS</div>
<div class="a" style="left:826px;top:974px;width:12px;height:12px;background:rgb(195,196,199)"></div>
<div class="a" style="left:826px;top:986px;width:12px;height:12px;background:rgb(189,192,199)"></div>
<div class="a" style="left:826px;top:998px;width:12px;height:12px;background:rgb(152,164,196)"></div>
<div class="a" style="left:826px;top:1010px;width:12px;height:12px;background:rgb(186,190,199)"></div>
<div class="a" style="left:826px;top:1022px;width:12px;height:12px;background:rgb(195,197,199)"></div>
<div class="a" style="left:838px;top:986px;width:12px;height:12px;background:rgb(189,192,199)"></div>
<div class="a" style="left:838px;top:998px;width:12px;height:12px;background:rgb(159,170,197)"></div>
<div class="a" style="left:838px;top:1010px;width:12px;height:12px;background:rgb(186,190,199)"></div>
<div class="a" style="left:850px;top:986px;width:12px;height:12px;background:rgb(189,192,199)"></div>
<div class="a" style="left:850px;top:998px;width:12px;height:12px;background:rgb(146,160,196)"></div>
<div class="a" style="left:850px;top:1010px;width:12px;height:12px;background:rgb(178,184,198)"></div>
<div class="a" style="left:850px;top:1022px;width:12px;height:12px;background:rgb(191,194,199)"></div>
<div class="a" style="left:862px;top:986px;width:12px;height:12px;background:rgb(193,194,199)"></div>
<div class="a" style="left:862px;top:998px;width:12px;height:12px;background:rgb(157,168,197)"></div>
<div class="a" style="left:874px;top:974px;width:12px;height:12px;background:rgb(194,196,199)"></div>
<div class="a" style="left:874px;top:998px;width:12px;height:12px;background:rgb(161,172,197)"></div>
<div class="a" style="left:886px;top:974px;width:12px;height:12px;background:rgb(191,194,199)"></div>
<div class="a" style="left:886px;top:986px;width:12px;height:12px;background:rgb(188,191,199)"></div>
<div class="a" style="left:886px;top:998px;width:12px;height:12px;background:rgb(165,174,197)"></div>
<div class="a" style="left:886px;top:1010px;width:12px;height:12px;background:rgb(172,179,198)"></div>
<div class="a" style="left:886px;top:1022px;width:12px;height:12px;background:rgb(192,194,199)"></div>
<div class="a" style="left:898px;top:986px;width:12px;height:12px;background:rgb(187,190,199)"></div>
<div class="a" style="left:898px;top:998px;width:12px;height:12px;background:rgb(167,176,197)"></div>
<div class="a" style="left:898px;top:1010px;width:12px;height:12px;background:rgb(177,183,198)"></div>
<div class="a" style="left:898px;top:1022px;width:12px;height:12px;background:rgb(195,197,199)"></div>
<div class="a" style="left:910px;top:974px;width:12px;height:12px;background:rgb(193,194,199)"></div>
<div class="a" style="left:910px;top:986px;width:12px;height:12px;background:rgb(177,183,198)"></div>
<div class="a" style="left:910px;top:998px;width:12px;height:12px;background:rgb(169,177,197)"></div>
<div class="a" style="left:910px;top:1010px;width:12px;height:12px;background:rgb(195,197,199)"></div>
<div class="a" style="left:910px;top:1022px;width:12px;height:12px;background:rgb(193,195,199)"></div>
<div class="a" style="left:922px;top:974px;width:12px;height:12px;background:rgb(192,194,199)"></div>
<div class="a" style="left:922px;top:986px;width:12px;height:12px;background:rgb(194,196,199)"></div>
<div class="a" style="left:922px;top:998px;width:12px;height:12px;background:rgb(148,161,196)"></div>
<div class="a" style="left:922px;top:1010px;width:12px;height:12px;background:rgb(193,195,199)"></div>
<div class="a" style="left:922px;top:1022px;width:12px;height:12px;background:rgb(196,197,199)"></div>
<div class="t" style="left:1449.0px;top:987.6px;font-size:28.5px;color:#0e0e0f;font-weight:400;">+sa11@connectedcars.dk</div>
<div class="a" style="left:1393px;top:982px;width:11px;height:11px;background:rgb(188,188,188)"></div>
<div class="a" style="left:1393px;top:993px;width:11px;height:11px;background:rgb(184,184,184)"></div>
<div class="a" style="left:1393px;top:1004px;width:11px;height:11px;background:rgb(168,168,168)"></div>
<div class="a" style="left:1393px;top:1015px;width:11px;height:11px;background:rgb(192,192,192)"></div>
<div class="a" style="left:1404px;top:982px;width:11px;height:11px;background:rgb(192,192,192)"></div>
<div class="a" style="left:1404px;top:993px;width:11px;height:11px;background:rgb(168,168,168)"></div>
<div class="a" style="left:1404px;top:1004px;width:11px;height:11px;background:rgb(168,168,168)"></div>
<div class="a" style="left:1404px;top:1026px;width:11px;height:11px;background:rgb(192,192,192)"></div>
<div class="a" style="left:1404px;top:1037px;width:11px;height:11px;background:rgb(182,182,182)"></div>
<div class="a" style="left:1415px;top:982px;width:11px;height:11px;background:rgb(187,187,187)"></div>
<div class="a" style="left:1415px;top:993px;width:11px;height:11px;background:rgb(176,176,176)"></div>
<div class="a" style="left:1415px;top:1004px;width:11px;height:11px;background:rgb(159,159,159)"></div>
<div class="a" style="left:1415px;top:1015px;width:11px;height:11px;background:rgb(192,192,192)"></div>
<div class="a" style="left:1415px;top:1026px;width:11px;height:11px;background:rgb(189,189,189)"></div>
<div class="a" style="left:1426px;top:993px;width:11px;height:11px;background:rgb(159,159,159)"></div>
<div class="a" style="left:1426px;top:1004px;width:11px;height:11px;background:rgb(170,170,170)"></div>
<div class="a" style="left:1426px;top:1026px;width:11px;height:11px;background:rgb(182,182,182)"></div>
<div class="a" style="left:1426px;top:1037px;width:11px;height:11px;background:rgb(188,188,188)"></div>
<div class="a" style="left:1437px;top:993px;width:11px;height:11px;background:rgb(168,168,168)"></div>
<div class="a" style="left:1437px;top:1004px;width:11px;height:11px;background:rgb(154,154,154)"></div>
<div class="a" style="left:1437px;top:1015px;width:11px;height:11px;background:rgb(191,191,191)"></div>
<div class="a" style="left:1437px;top:1026px;width:11px;height:11px;background:rgb(187,187,187)"></div>
<div class="a" style="left:1448px;top:982px;width:1px;height:11px;background:rgb(185,185,185)"></div>
<div class="a" style="left:1448px;top:993px;width:1px;height:11px;background:rgb(165,165,165)"></div>
<div class="a" style="left:1448px;top:1004px;width:1px;height:11px;background:rgb(175,175,175)"></div>
<div class="a" style="left:1448px;top:1015px;width:1px;height:11px;background:rgb(192,192,192)"></div>
<div class="a" style="left:1448px;top:1026px;width:1px;height:11px;background:rgb(184,184,184)"></div>
<div class="a" style="left:1448px;top:1037px;width:1px;height:11px;background:rgb(183,183,183)"></div>
<div class="t" style="left:2526.6px;top:988.5px;font-size:28px;color:#0e0e0f;font-weight:400;">-</div>
<div class="t" style="left:2773.4px;top:987.9px;font-size:27.5px;color:#1f4fab;font-weight:400;">All</div>
<div class="a" style="left:731px;top:1048px;width:2200px;height:2px;background:#b5b5b7"></div>
<div class="a" style="left:755px;top:1068px;width:58px;height:58px;background:#5cbe6e;border-radius:7px"></div>
<div class="t" style="left:755.0px;top:1085.1px;font-size:24.5px;color:#d2d2d2;font-weight:400;width:58px;text-align:center;-webkit-text-stroke:0.7px #d2d2d2">MM</div>
<div class="a" style="left:826px;top:1070px;width:12px;height:12px;background:rgb(196,197,199)"></div>
<div class="a" style="left:826px;top:1082px;width:12px;height:12px;background:rgb(170,178,198)"></div>
<div class="a" style="left:826px;top:1094px;width:12px;height:12px;background:rgb(155,167,197)"></div>
<div class="a" style="left:826px;top:1106px;width:12px;height:12px;background:rgb(179,184,198)"></div>
<div class="a" style="left:826px;top:1118px;width:12px;height:12px;background:rgb(195,196,199)"></div>
<div class="a" style="left:838px;top:1082px;width:12px;height:12px;background:rgb(175,181,198)"></div>
<div class="a" style="left:838px;top:1094px;width:12px;height:12px;background:rgb(148,162,196)"></div>
<div class="a" style="left:838px;top:1106px;width:12px;height:12px;background:rgb(193,195,199)"></div>
<div class="a" style="left:838px;top:1118px;width:12px;height:12px;background:rgb(194,195,199)"></div>
<div class="a" style="left:850px;top:1070px;width:12px;height:12px;background:rgb(193,195,199)"></div>
<div class="a" style="left:850px;top:1082px;width:12px;height:12px;background:rgb(178,184,198)"></div>
<div class="a" style="left:850px;top:1094px;width:12px;height:12px;background:rgb(149,162,196)"></div>
<div class="a" style="left:850px;top:1106px;width:12px;height:12px;background:rgb(174,181,198)"></div>
<div class="a" style="left:850px;top:1118px;width:12px;height:12px;background:rgb(196,197,199)"></div>
<div class="a" style="left:862px;top:1070px;width:12px;height:12px;background:rgb(195,196,199)"></div>
<div class="a" style="left:862px;top:1082px;width:12px;height:12px;background:rgb(178,184,198)"></div>
<div class="a" style="left:862px;top:1094px;width:12px;height:12px;background:rgb(169,177,197)"></div>
<div class="a" style="left:874px;top:1070px;width:12px;height:12px;background:rgb(192,194,199)"></div>
<div class="a" style="left:874px;top:1082px;width:12px;height:12px;background:rgb(190,192,199)"></div>
<div class="a" style="left:874px;top:1094px;width:12px;height:12px;background:rgb(164,174,197)"></div>
<div class="a" style="left:874px;top:1106px;width:12px;height:12px;background:rgb(196,197,199)"></div>
<div class="a" style="left:886px;top:1070px;width:12px;height:12px;background:rgb(191,193,199)"></div>
<div class="a" style="left:886px;top:1094px;width:12px;height:12px;background:rgb(144,159,196)"></div>
<div class="a" style="left:886px;top:1106px;width:12px;height:12px;background:rgb(183,187,198)"></div>
<div class="a" style="left:898px;top:1082px;width:12px;height:12px;background:rgb(173,180,198)"></div>
<div class="a" style="left:898px;top:1094px;width:12px;height:12px;background:rgb(162,172,197)"></div>
<div class="a" style="left:898px;top:1106px;width:12px;height:12px;background:rgb(171,179,198)"></div>
<div class="a" style="left:910px;top:1070px;width:12px;height:12px;background:rgb(192,194,199)"></div>
<div class="a" style="left:910px;top:1082px;width:12px;height:12px;background:rgb(180,185,198)"></div>
<div class="a" style="left:910px;top:1094px;width:12px;height:12px;background:rgb(149,162,196)"></div>
<div class="a" style="left:910px;top:1106px;width:12px;height:12px;background:rgb(185,189,199)"></div>
<div class="a" style="left:910px;top:1118px;width:12px;height:12px;background:rgb(193,195,199)"></div>
<div class="a" style="left:922px;top:1070px;width:12px;height:12px;background:rgb(196,197,199)"></div>
<div class="a" style="left:922px;top:1082px;width:12px;height:12px;background:rgb(192,194,199)"></div>
<div class="a" style="left:922px;top:1094px;width:12px;height:12px;background:rgb(169,177,197)"></div>
<div class="a" style="left:922px;top:1106px;width:12px;height:12px;background:rgb(185,189,199)"></div>
<div class="a" style="left:922px;top:1118px;width:12px;height:12px;background:rgb(193,195,199)"></div>
<div class="t" style="left:934.0px;top:1081.7px;font-size:29px;color:#1f4fab;font-weight:400;">r manager</div>
<div class="t" style="left:1449.0px;top:1083.6px;font-size:28.5px;color:#0e0e0f;font-weight:400;">+manager@connectedcars.dk</div>
<div class="a" style="left:1393px;top:1089px;width:11px;height:11px;background:rgb(184,184,184)"></div>
<div class="a" style="left:1393px;top:1100px;width:11px;height:11px;background:rgb(149,149,149)"></div>
<div class="a" style="left:1393px;top:1111px;width:11px;height:11px;background:rgb(190,190,190)"></div>
<div class="a" style="left:1393px;top:1122px;width:11px;height:11px;background:rgb(190,190,190)"></div>
<div class="a" style="left:1393px;top:1133px;width:11px;height:11px;background:rgb(189,189,189)"></div>
<div class="a" style="left:1404px;top:1089px;width:11px;height:11px;background:rgb(171,171,171)"></div>
<div class="a" style="left:1404px;top:1100px;width:11px;height:11px;background:rgb(173,173,173)"></div>
<div class="a" style="left:1404px;top:1111px;width:11px;height:11px;background:rgb(187,187,187)"></div>
<div class="a" style="left:1404px;top:1122px;width:11px;height:11px;background:rgb(191,191,191)"></div>
<div class="a" style="left:1404px;top:1133px;width:11px;height:11px;background:rgb(188,188,188)"></div>
<div class="a" style="left:1415px;top:1078px;width:11px;height:11px;background:rgb(183,183,183)"></div>
<div class="a" style="left:1415px;top:1089px;width:11px;height:11px;background:rgb(169,169,169)"></div>
<div class="a" style="left:1415px;top:1100px;width:11px;height:11px;background:rgb(155,155,155)"></div>
<div class="a" style="left:1415px;top:1111px;width:11px;height:11px;background:rgb(189,189,189)"></div>
<div class="a" style="left:1415px;top:1122px;width:11px;height:11px;background:rgb(182,182,182)"></div>
<div class="a" style="left:1415px;top:1133px;width:11px;height:11px;background:rgb(191,191,191)"></div>
<div class="a" style="left:1426px;top:1089px;width:11px;height:11px;background:rgb(148,148,148)"></div>
<div class="a" style="left:1426px;top:1100px;width:11px;height:11px;background:rgb(157,157,157)"></div>
<div class="a" style="left:1426px;top:1122px;width:11px;height:11px;background:rgb(193,193,193)"></div>
<div class="a" style="left:1426px;top:1133px;width:11px;height:11px;background:rgb(191,191,191)"></div>
<div class="a" style="left:1437px;top:1089px;width:11px;height:11px;background:rgb(181,181,181)"></div>
<div class="a" style="left:1437px;top:1100px;width:11px;height:11px;background:rgb(186,186,186)"></div>
<div class="a" style="left:1437px;top:1133px;width:11px;height:11px;background:rgb(184,184,184)"></div>
<div class="a" style="left:1448px;top:1078px;width:1px;height:11px;background:rgb(184,184,184)"></div>
<div class="a" style="left:1448px;top:1089px;width:1px;height:11px;background:rgb(168,168,168)"></div>
<div class="a" style="left:1448px;top:1100px;width:1px;height:11px;background:rgb(175,175,175)"></div>
<div class="a" style="left:1448px;top:1111px;width:1px;height:11px;background:rgb(184,184,184)"></div>
<div class="a" style="left:1448px;top:1122px;width:1px;height:11px;background:rgb(186,186,186)"></div>
<div class="a" style="left:1448px;top:1133px;width:1px;height:11px;background:rgb(192,192,192)"></div>
<div class="t" style="left:2526.6px;top:1084.5px;font-size:28px;color:#0e0e0f;font-weight:400;">-</div>
<div class="t" style="left:2773.4px;top:1083.9px;font-size:27.5px;color:#1f4fab;font-weight:400;">All</div>
<div class="a" style="left:731px;top:1144px;width:2200px;height:2px;background:#b5b5b7"></div>
<div class="a" style="left:755px;top:1164px;width:58px;height:58px;background:#1c17c6;border-radius:7px"></div>
<div class="t" style="left:755.0px;top:1181.1px;font-size:24.5px;color:#d2d2d2;font-weight:400;width:58px;text-align:center;-webkit-text-stroke:0.7px #d2d2d2">MT</div>
<div class="a" style="left:826px;top:1166px;width:12px;height:12px;background:rgb(195,196,199)"></div>
<div class="a" style="left:826px;top:1178px;width:12px;height:12px;background:rgb(172,180,198)"></div>
<div class="a" style="left:826px;top:1190px;width:12px;height:12px;background:rgb(157,168,197)"></div>
<div class="a" style="left:826px;top:1202px;width:12px;height:12px;background:rgb(173,180,198)"></div>
<div class="a" style="left:826px;top:1214px;width:12px;height:12px;background:rgb(194,196,199)"></div>
<div class="a" style="left:838px;top:1166px;width:12px;height:12px;background:rgb(191,193,199)"></div>
<div class="a" style="left:838px;top:1178px;width:12px;height:12px;background:rgb(189,192,199)"></div>
<div class="a" style="left:838px;top:1190px;width:12px;height:12px;background:rgb(153,166,196)"></div>
<div class="a" style="left:838px;top:1202px;width:12px;height:12px;background:rgb(185,189,199)"></div>
<div class="a" style="left:838px;top:1214px;width:12px;height:12px;background:rgb(194,196,199)"></div>
<div class="a" style="left:850px;top:1178px;width:12px;height:12px;background:rgb(175,182,198)"></div>
<div class="a" style="left:850px;top:1190px;width:12px;height:12px;background:rgb(149,162,196)"></div>
<div class="a" style="left:850px;top:1202px;width:12px;height:12px;background:rgb(180,185,198)"></div>
<div class="a" style="left:850px;top:1214px;width:12px;height:12px;background:rgb(194,196,199)"></div>
<div class="a" style="left:862px;top:1178px;width:12px;height:12px;background:rgb(176,183,198)"></div>
<div class="a" style="left:862px;top:1190px;width:12px;height:12px;background:rgb(163,173,197)"></div>
<div class="a" style="left:874px;top:1178px;width:12px;height:12px;background:rgb(196,197,199)"></div>
<div class="a" style="left:874px;top:1190px;width:12px;height:12px;background:rgb(159,170,197)"></div>
<div class="a" style="left:874px;top:1202px;width:12px;height:12px;background:rgb(173,180,198)"></div>
<div class="a" style="left:874px;top:1214px;width:12px;height:12px;background:rgb(194,196,199)"></div>
<div class="a" style="left:886px;top:1166px;width:12px;height:12px;background:rgb(196,197,199)"></div>
<div class="a" style="left:886px;top:1178px;width:12px;height:12px;background:rgb(189,192,199)"></div>
<div class="a" style="left:886px;top:1190px;width:12px;height:12px;background:rgb(148,162,196)"></div>
<div class="a" style="left:886px;top:1202px;width:12px;height:12px;background:rgb(178,184,198)"></div>
<div class="a" style="left:886px;top:1214px;width:12px;height:12px;background:rgb(195,196,199)"></div>
<div class="a" style="left:898px;top:1178px;width:12px;height:12px;background:rgb(172,179,198)"></div>
<div class="a" style="left:898px;top:1190px;width:12px;height:12px;background:rgb(153,166,196)"></div>
<div class="a" style="left:898px;top:1202px;width:12px;height:12px;background:rgb(174,181,198)"></div>
<div class="a" style="left:910px;top:1166px;width:12px;height:12px;background:rgb(194,196,199)"></div>
<div class="a" style="left:910px;top:1178px;width:12px;height:12px;background:rgb(186,189,199)"></div>
<div class="a" style="left:910px;top:1190px;width:12px;height:12px;background:rgb(163,173,197)"></div>
<div class="a" style="left:910px;top:1202px;width:12px;height:12px;background:rgb(175,182,198)"></div>
<div class="a" style="left:910px;top:1214px;width:12px;height:12px;background:rgb(194,196,199)"></div>
<div class="a" style="left:922px;top:1166px;width:12px;height:12px;background:rgb(191,193,199)"></div>
<div class="a" style="left:922px;top:1178px;width:12px;height:12px;background:rgb(175,181,198)"></div>
<div class="a" style="left:922px;top:1190px;width:12px;height:12px;background:rgb(173,180,198)"></div>
<div class="a" style="left:922px;top:1202px;width:12px;height:12px;background:rgb(181,186,198)"></div>
<div class="t" style="left:934.0px;top:1177.7px;font-size:29px;color:#1f4fab;font-weight:400;">st2</div>
<div class="t" style="left:1449.0px;top:1179.6px;font-size:28.5px;color:#0e0e0f;font-weight:400;">+2@connectedcars.dk</div>
<div class="a" style="left:1393px;top:1174px;width:11px;height:11px;background:rgb(185,185,185)"></div>
<div class="a" style="left:1393px;top:1185px;width:11px;height:11px;background:rgb(154,154,154)"></div>
<div class="a" style="left:1393px;top:1196px;width:11px;height:11px;background:rgb(182,182,182)"></div>
<div class="a" style="left:1393px;top:1207px;width:11px;height:11px;background:rgb(183,183,183)"></div>
<div class="a" style="left:1393px;top:1218px;width:11px;height:11px;background:rgb(190,190,190)"></div>
<div class="a" style="left:1393px;top:1229px;width:11px;height:11px;background:rgb(184,184,184)"></div>
<div class="a" style="left:1404px;top:1174px;width:11px;height:11px;background:rgb(188,188,188)"></div>
<div class="a" style="left:1404px;top:1185px;width:11px;height:11px;background:rgb(184,184,184)"></div>
<div class="a" style="left:1404px;top:1196px;width:11px;height:11px;background:rgb(167,167,167)"></div>
<div class="a" style="left:1404px;top:1207px;width:11px;height:11px;background:rgb(191,191,191)"></div>
<div class="a" style="left:1415px;top:1185px;width:11px;height:11px;background:rgb(150,150,150)"></div>
<div class="a" style="left:1415px;top:1196px;width:11px;height:11px;background:rgb(169,169,169)"></div>
<div class="a" style="left:1415px;top:1218px;width:11px;height:11px;background:rgb(193,193,193)"></div>
<div class="a" style="left:1426px;top:1174px;width:11px;height:11px;background:rgb(194,194,194)"></div>
<div class="a" style="left:1426px;top:1185px;width:11px;height:11px;background:rgb(174,174,174)"></div>
<div class="a" style="left:1426px;top:1196px;width:11px;height:11px;background:rgb(170,170,170)"></div>
<div class="a" style="left:1426px;top:1207px;width:11px;height:11px;background:rgb(191,191,191)"></div>
<div class="a" style="left:1426px;top:1218px;width:11px;height:11px;background:rgb(182,182,182)"></div>
<div class="a" style="left:1437px;top:1174px;width:11px;height:11px;background:rgb(192,192,192)"></div>
<div class="a" style="left:1437px;top:1185px;width:11px;height:11px;background:rgb(179,179,179)"></div>
<div class="a" style="left:1437px;top:1196px;width:11px;height:11px;background:rgb(148,148,148)"></div>
<div class="a" style="left:1437px;top:1207px;width:11px;height:11px;background:rgb(193,193,193)"></div>
<div class="a" style="left:1437px;top:1229px;width:11px;height:11px;background:rgb(184,184,184)"></div>
<div class="a" style="left:1448px;top:1185px;width:1px;height:11px;background:rgb(164,164,164)"></div>
<div class="a" style="left:1448px;top:1196px;width:1px;height:11px;background:rgb(160,160,160)"></div>
<div class="a" style="left:1448px;top:1207px;width:1px;height:11px;background:rgb(183,183,183)"></div>
<div class="a" style="left:1448px;top:1218px;width:1px;height:11px;background:rgb(192,192,192)"></div>
<div class="a" style="left:1448px;top:1229px;width:1px;height:11px;background:rgb(188,188,188)"></div>
<div class="t" style="left:2526.6px;top:1180.5px;font-size:28px;color:#0e0e0f;font-weight:400;">-</div>
<div class="t" style="left:2773.4px;top:1179.9px;font-size:27.5px;color:#1f4fab;font-weight:400;">All</div>
<div class="a" style="left:731px;top:1240px;width:2200px;height:2px;background:#b5b5b7"></div>
<div class="a" style="left:755px;top:1260px;width:58px;height:58px;background:#256596;border-radius:7px"></div>
<div class="t" style="left:755.0px;top:1277.1px;font-size:24.5px;color:#d2d2d2;font-weight:400;width:58px;text-align:center;-webkit-text-stroke:0.7px #d2d2d2">AB</div>
<div class="a" style="left:826px;top:1262px;width:12px;height:12px;background:rgb(196,197,199)"></div>
<div class="a" style="left:826px;top:1274px;width:12px;height:12px;background:rgb(193,194,199)"></div>
<div class="a" style="left:826px;top:1286px;width:12px;height:12px;background:rgb(173,180,198)"></div>
<div class="a" style="left:826px;top:1298px;width:12px;height:12px;background:rgb(172,179,198)"></div>
<div class="a" style="left:838px;top:1274px;width:12px;height:12px;background:rgb(193,195,199)"></div>
<div class="a" style="left:838px;top:1286px;width:12px;height:12px;background:rgb(158,169,197)"></div>
<div class="a" style="left:838px;top:1298px;width:12px;height:12px;background:rgb(177,183,198)"></div>
<div class="a" style="left:850px;top:1286px;width:12px;height:12px;background:rgb(147,161,196)"></div>
<div class="a" style="left:850px;top:1298px;width:12px;height:12px;background:rgb(190,193,199)"></div>
<div class="a" style="left:862px;top:1262px;width:12px;height:12px;background:rgb(191,193,199)"></div>
<div class="a" style="left:862px;top:1274px;width:12px;height:12px;background:rgb(177,183,198)"></div>
<div class="a" style="left:862px;top:1286px;width:12px;height:12px;background:rgb(150,163,196)"></div>
<div class="a" style="left:862px;top:1298px;width:12px;height:12px;background:rgb(177,183,198)"></div>
<div class="t" style="left:1449.0px;top:1275.6px;font-size:28.5px;color:#0e0e0f;font-weight:400;">+tokensa@connectedcars.dk</div>
<div class="a" style="left:1393px;top:1270px;width:11px;height:11px;background:rgb(185,185,185)"></div>
<div class="a" style="left:1393px;top:1281px;width:11px;height:11px;background:rgb(146,146,146)"></div>
<div class="a" style="left:1393px;top:1292px;width:11px;height:11px;background:rgb(146,146,146)"></div>
<div class="a" style="left:1393px;top:1314px;width:11px;height:11px;background:rgb(188,188,188)"></div>
<div class="a" style="left:1393px;top:1325px;width:11px;height:11px;background:rgb(183,183,183)"></div>
<div class="a" style="left:1404px;top:1270px;width:11px;height:11px;background:rgb(185,185,185)"></div>
<div class="a" style="left:1404px;top:1281px;width:11px;height:11px;background:rgb(174,174,174)"></div>
<div class="a" style="left:1404px;top:1292px;width:11px;height:11px;background:rgb(175,175,175)"></div>
<div class="a" style="left:1404px;top:1303px;width:11px;height:11px;background:rgb(192,192,192)"></div>
<div class="a" style="left:1404px;top:1314px;width:11px;height:11px;background:rgb(190,190,190)"></div>
<div class="a" style="left:1404px;top:1325px;width:11px;height:11px;background:rgb(192,192,192)"></div>
<div class="a" style="left:1415px;top:1270px;width:11px;height:11px;background:rgb(188,188,188)"></div>
<div class="a" style="left:1415px;top:1281px;width:11px;height:11px;background:rgb(161,161,161)"></div>
<div class="a" style="left:1415px;top:1292px;width:11px;height:11px;background:rgb(158,158,158)"></div>
<div class="a" style="left:1415px;top:1303px;width:11px;height:11px;background:rgb(191,191,191)"></div>
<div class="a" style="left:1415px;top:1314px;width:11px;height:11px;background:rgb(182,182,182)"></div>
<div class="a" style="left:1415px;top:1325px;width:11px;height:11px;background:rgb(190,190,190)"></div>
<div class="a" style="left:1426px;top:1270px;width:11px;height:11px;background:rgb(190,190,190)"></div>
<div class="a" style="left:1426px;top:1281px;width:11px;height:11px;background:rgb(146,146,146)"></div>
<div class="a" style="left:1426px;top:1292px;width:11px;height:11px;background:rgb(153,153,153)"></div>
<div class="a" style="left:1426px;top:1303px;width:11px;height:11px;background:rgb(189,189,189)"></div>
<div class="a" style="left:1426px;top:1314px;width:11px;height:11px;background:rgb(190,190,190)"></div>
<div class="a" style="left:1426px;top:1325px;width:11px;height:11px;background:rgb(182,182,182)"></div>
<div class="a" style="left:1437px;top:1270px;width:11px;height:11px;background:rgb(193,193,193)"></div>
<div class="a" style="left:1437px;top:1281px;width:11px;height:11px;background:rgb(183,183,183)"></div>
<div class="a" style="left:1437px;top:1292px;width:11px;height:11px;background:rgb(174,174,174)"></div>
<div class="a" style="left:1437px;top:1314px;width:11px;height:11px;background:rgb(184,184,184)"></div>
<div class="a" style="left:1437px;top:1325px;width:11px;height:11px;background:rgb(182,182,182)"></div>
<div class="a" style="left:1448px;top:1281px;width:1px;height:11px;background:rgb(188,188,188)"></div>
<div class="a" style="left:1448px;top:1292px;width:1px;height:11px;background:rgb(169,169,169)"></div>
<div class="a" style="left:1448px;top:1303px;width:1px;height:11px;background:rgb(186,186,186)"></div>
<div class="a" style="left:1448px;top:1314px;width:1px;height:11px;background:rgb(189,189,189)"></div>
<div class="t" style="left:2526.6px;top:1276.5px;font-size:28px;color:#0e0e0f;font-weight:400;">-</div>
<div class="t" style="left:2773.4px;top:1275.9px;font-size:27.5px;color:#1f4fab;font-weight:400;">All</div>
<div class="a" style="left:731px;top:1336px;width:2200px;height:2px;background:#b5b5b7"></div>
<div class="a" style="left:755px;top:1356px;width:58px;height:58px;background:#21808e;border-radius:7px"></div>
<div class="t" style="left:755.0px;top:1373.1px;font-size:24.5px;color:#d2d2d2;font-weight:400;width:58px;text-align:center;-webkit-text-stroke:0.7px #d2d2d2">HE</div>
<div class="a" style="left:826px;top:1358px;width:12px;height:12px;background:rgb(192,194,199)"></div>
<div class="a" style="left:826px;top:1370px;width:12px;height:12px;background:rgb(175,182,198)"></div>
<div class="a" style="left:826px;top:1382px;width:12px;height:12px;background:rgb(155,167,197)"></div>
<div class="a" style="left:826px;top:1394px;width:12px;height:12px;background:rgb(173,180,198)"></div>
<div class="a" style="left:826px;top:1406px;width:12px;height:12px;background:rgb(193,195,199)"></div>
<div class="a" style="left:838px;top:1358px;width:12px;height:12px;background:rgb(192,194,199)"></div>
<div class="a" style="left:838px;top:1370px;width:12px;height:12px;background:rgb(193,195,199)"></div>
<div class="a" style="left:838px;top:1382px;width:12px;height:12px;background:rgb(144,159,196)"></div>
<div class="a" style="left:838px;top:1394px;width:12px;height:12px;background:rgb(180,186,198)"></div>
<div class="a" style="left:838px;top:1406px;width:12px;height:12px;background:rgb(194,196,199)"></div>
<div class="a" style="left:850px;top:1358px;width:12px;height:12px;background:rgb(195,197,199)"></div>
<div class="a" style="left:850px;top:1370px;width:12px;height:12px;background:rgb(191,193,199)"></div>
<div class="a" style="left:850px;top:1382px;width:12px;height:12px;background:rgb(146,160,196)"></div>
<div class="a" style="left:850px;top:1406px;width:12px;height:12px;background:rgb(196,197,199)"></div>
<div class="a" style="left:862px;top:1370px;width:12px;height:12px;background:rgb(172,179,198)"></div>
<div class="a" style="left:862px;top:1382px;width:12px;height:12px;background:rgb(146,160,196)"></div>
<div class="a" style="left:862px;top:1394px;width:12px;height:12px;background:rgb(196,197,199)"></div>
<div class="a" style="left:862px;top:1406px;width:12px;height:12px;background:rgb(191,193,199)"></div>
<div class="a" style="left:874px;top:1358px;width:12px;height:12px;background:rgb(194,195,199)"></div>
<div class="a" style="left:874px;top:1370px;width:12px;height:12px;background:rgb(173,180,198)"></div>
<div class="a" style="left:874px;top:1382px;width:12px;height:12px;background:rgb(145,160,196)"></div>
<div class="a" style="left:874px;top:1394px;width:12px;height:12px;background:rgb(180,185,198)"></div>
<div class="a" style="left:886px;top:1382px;width:12px;height:12px;background:rgb(156,168,197)"></div>
<div class="a" style="left:886px;top:1406px;width:12px;height:12px;background:rgb(191,193,199)"></div>
<div class="a" style="left:898px;top:1370px;width:12px;height:12px;background:rgb(175,182,198)"></div>
<div class="a" style="left:898px;top:1382px;width:12px;height:12px;background:rgb(170,178,198)"></div>
<div class="a" style="left:898px;top:1394px;width:12px;height:12px;background:rgb(188,191,199)"></div>
<div class="a" style="left:898px;top:1406px;width:12px;height:12px;background:rgb(193,194,199)"></div>
<div class="a" style="left:910px;top:1382px;width:12px;height:12px;background:rgb(165,174,197)"></div>
<div class="a" style="left:910px;top:1394px;width:12px;height:12px;background:rgb(173,180,198)"></div>
<div class="a" style="left:910px;top:1406px;width:12px;height:12px;background:rgb(192,194,199)"></div>
<div class="a" style="left:922px;top:1370px;width:12px;height:12px;background:rgb(193,195,199)"></div>
<div class="a" style="left:922px;top:1382px;width:12px;height:12px;background:rgb(158,169,197)"></div>
<div class="a" style="left:922px;top:1394px;width:12px;height:12px;background:rgb(185,189,199)"></div>
<div class="a" style="left:922px;top:1406px;width:12px;height:12px;background:rgb(194,195,199)"></div>
<div class="t" style="left:934.0px;top:1369.7px;font-size:29px;color:#1f4fab;font-weight:400;">l Ghazouani</div>
<div class="t" style="left:1440.8px;top:1371.6px;font-size:28.5px;color:#0e0e0f;font-weight:400;">@connectedcars.dk</div>
<div class="a" style="left:1393px;top:1366px;width:11px;height:11px;background:rgb(183,183,183)"></div>
<div class="a" style="left:1393px;top:1377px;width:11px;height:11px;background:rgb(155,155,155)"></div>
<div class="a" style="left:1393px;top:1388px;width:11px;height:11px;background:rgb(169,169,169)"></div>
<div class="a" style="left:1393px;top:1421px;width:11px;height:11px;background:rgb(194,194,194)"></div>
<div class="a" style="left:1404px;top:1377px;width:11px;height:11px;background:rgb(167,167,167)"></div>
<div class="a" style="left:1404px;top:1388px;width:11px;height:11px;background:rgb(162,162,162)"></div>
<div class="a" style="left:1404px;top:1399px;width:11px;height:11px;background:rgb(195,195,195)"></div>
<div class="a" style="left:1404px;top:1410px;width:11px;height:11px;background:rgb(188,188,188)"></div>
<div class="a" style="left:1404px;top:1421px;width:11px;height:11px;background:rgb(193,193,193)"></div>
<div class="a" style="left:1415px;top:1377px;width:11px;height:11px;background:rgb(151,151,151)"></div>
<div class="a" style="left:1415px;top:1388px;width:11px;height:11px;background:rgb(178,178,178)"></div>
<div class="a" style="left:1415px;top:1410px;width:11px;height:11px;background:rgb(186,186,186)"></div>
<div class="a" style="left:1415px;top:1421px;width:11px;height:11px;background:rgb(187,187,187)"></div>
<div class="a" style="left:1426px;top:1377px;width:11px;height:11px;background:rgb(182,182,182)"></div>
<div class="a" style="left:1426px;top:1388px;width:11px;height:11px;background:rgb(163,163,163)"></div>
<div class="a" style="left:1426px;top:1410px;width:11px;height:11px;background:rgb(193,193,193)"></div>
<div class="a" style="left:1437px;top:1377px;width:11px;height:11px;background:rgb(170,170,170)"></div>
<div class="a" style="left:1437px;top:1388px;width:11px;height:11px;background:rgb(172,172,172)"></div>
<div class="a" style="left:1437px;top:1399px;width:11px;height:11px;background:rgb(191,191,191)"></div>
<div class="a" style="left:1437px;top:1421px;width:11px;height:11px;background:rgb(188,188,188)"></div>
<div class="a" style="left:1448px;top:1366px;width:1px;height:11px;background:rgb(194,194,194)"></div>
<div class="a" style="left:1448px;top:1377px;width:1px;height:11px;background:rgb(162,162,162)"></div>
<div class="a" style="left:1448px;top:1388px;width:1px;height:11px;background:rgb(153,153,153)"></div>
<div class="a" style="left:1448px;top:1399px;width:1px;height:11px;background:rgb(184,184,184)"></div>
<div class="a" style="left:1448px;top:1421px;width:1px;height:11px;background:rgb(190,190,190)"></div>
<div class="t" style="left:2526.6px;top:1372.5px;font-size:28px;color:#0e0e0f;font-weight:400;">-</div>
<div class="t" style="left:2773.4px;top:1371.9px;font-size:27.5px;color:#1f4fab;font-weight:400;">All</div>
<div class="a" style="left:731px;top:1432px;width:2200px;height:2px;background:#b5b5b7"></div>
<div class="a" style="left:755px;top:1452px;width:58px;height:42px;background:#99304c;border-radius:7px 7px 0 0"></div>
<div class="t" style="left:755.0px;top:1469.1px;font-size:24.5px;color:#d2d2d2;font-weight:400;width:58px;text-align:center;-webkit-text-stroke:0.7px #d2d2d2">YL</div>
<div class="a" style="left:826px;top:1454px;width:12px;height:12px;background:rgb(195,196,199)"></div>
<div class="a" style="left:826px;top:1466px;width:12px;height:12px;background:rgb(171,178,198)"></div>
<div class="a" style="left:826px;top:1478px;width:12px;height:12px;background:rgb(163,173,197)"></div>
<div class="a" style="left:826px;top:1490px;width:12px;height:4px;background:rgb(178,184,198)"></div>
<div class="a" style="left:838px;top:1466px;width:12px;height:12px;background:rgb(180,185,198)"></div>
<div class="a" style="left:838px;top:1478px;width:12px;height:12px;background:rgb(148,162,196)"></div>
<div class="a" style="left:838px;top:1490px;width:12px;height:4px;background:rgb(173,180,198)"></div>
<div class="a" style="left:850px;top:1466px;width:12px;height:12px;background:rgb(189,192,199)"></div>
<div class="a" style="left:850px;top:1478px;width:12px;height:12px;background:rgb(173,180,198)"></div>
<div class="a" style="left:850px;top:1490px;width:12px;height:4px;background:rgb(176,182,198)"></div>
<div class="a" style="left:862px;top:1466px;width:12px;height:12px;background:rgb(195,196,199)"></div>
<div class="a" style="left:862px;top:1478px;width:12px;height:12px;background:rgb(172,179,198)"></div>
<div class="a" style="left:862px;top:1490px;width:12px;height:4px;background:rgb(195,196,199)"></div>
<div class="a" style="left:874px;top:1466px;width:12px;height:12px;background:rgb(189,192,199)"></div>
<div class="a" style="left:874px;top:1478px;width:12px;height:12px;background:rgb(147,161,196)"></div>
<div class="a" style="left:874px;top:1490px;width:12px;height:4px;background:rgb(195,196,199)"></div>
<div class="a" style="left:886px;top:1466px;width:12px;height:12px;background:rgb(193,194,199)"></div>
<div class="a" style="left:886px;top:1478px;width:12px;height:12px;background:rgb(148,162,196)"></div>
<div class="a" style="left:886px;top:1490px;width:12px;height:4px;background:rgb(186,190,199)"></div>
<div class="a" style="left:898px;top:1454px;width:12px;height:12px;background:rgb(196,197,199)"></div>
<div class="a" style="left:898px;top:1466px;width:12px;height:12px;background:rgb(172,180,198)"></div>
<div class="a" style="left:898px;top:1478px;width:12px;height:12px;background:rgb(160,171,197)"></div>
<div class="a" style="left:898px;top:1490px;width:12px;height:4px;background:rgb(186,189,199)"></div>
<div class="a" style="left:910px;top:1454px;width:12px;height:12px;background:rgb(193,195,199)"></div>
<div class="a" style="left:910px;top:1466px;width:12px;height:12px;background:rgb(180,185,198)"></div>
<div class="a" style="left:910px;top:1478px;width:12px;height:12px;background:rgb(146,160,196)"></div>
<div class="a" style="left:910px;top:1490px;width:12px;height:4px;background:rgb(182,187,198)"></div>
<div class="a" style="left:922px;top:1454px;width:12px;height:12px;background:rgb(196,197,199)"></div>
<div class="a" style="left:922px;top:1466px;width:12px;height:12px;background:rgb(183,188,198)"></div>
<div class="a" style="left:922px;top:1478px;width:12px;height:12px;background:rgb(166,175,197)"></div>
<div class="a" style="left:922px;top:1490px;width:12px;height:4px;background:rgb(195,196,199)"></div>
<div class="t" style="left:934.0px;top:1465.7px;font-size:29px;color:#1f4fab;font-weight:400;">ng</div>
<div class="t" style="left:1429.0px;top:1467.6px;font-size:28.5px;color:#0e0e0f;font-weight:400;">@connectedcars.dk</div>
<div class="a" style="left:1393px;top:1462px;width:11px;height:11px;background:rgb(191,191,191)"></div>
<div class="a" style="left:1393px;top:1473px;width:11px;height:11px;background:rgb(176,176,176)"></div>
<div class="a" style="left:1393px;top:1484px;width:11px;height:10px;background:rgb(156,156,156)"></div>
<div class="a" style="left:1404px;top:1462px;width:11px;height:11px;background:rgb(183,183,183)"></div>
<div class="a" style="left:1404px;top:1473px;width:11px;height:11px;background:rgb(150,150,150)"></div>
<div class="a" style="left:1404px;top:1484px;width:11px;height:10px;background:rgb(158,158,158)"></div>
<div class="a" style="left:1415px;top:1473px;width:11px;height:11px;background:rgb(188,188,188)"></div>
<div class="a" style="left:1415px;top:1484px;width:11px;height:10px;background:rgb(183,183,183)"></div>
<div class="a" style="left:1426px;top:1462px;width:11px;height:11px;background:rgb(183,183,183)"></div>
<div class="a" style="left:1426px;top:1473px;width:11px;height:11px;background:rgb(167,167,167)"></div>
<div class="a" style="left:1426px;top:1484px;width:11px;height:10px;background:rgb(160,160,160)"></div>
<div class="a" style="left:1437px;top:1462px;width:11px;height:11px;background:rgb(192,192,192)"></div>
<div class="a" style="left:1437px;top:1473px;width:11px;height:11px;background:rgb(189,189,189)"></div>
<div class="a" style="left:1437px;top:1484px;width:11px;height:10px;background:rgb(162,162,162)"></div>
<div class="a" style="left:1448px;top:1462px;width:1px;height:11px;background:rgb(193,193,193)"></div>
<div class="a" style="left:1448px;top:1473px;width:1px;height:11px;background:rgb(181,181,181)"></div>
<div class="a" style="left:1448px;top:1484px;width:1px;height:10px;background:rgb(153,153,153)"></div>
<div class="t" style="left:2526.6px;top:1468.5px;font-size:28px;color:#0e0e0f;font-weight:400;">-</div>
<div class="t" style="left:2773.4px;top:1467.9px;font-size:27.5px;color:#1f4fab;font-weight:400;">All</div>
<div class="a" style="left:2214px;top:575px;width:286px;height:933px;background:#ffffff;border-radius:7px;box-shadow:inset 0 0 0 6px #ffd92e"></div>
<div class="a" style="left:2220px;top:581px;width:274px;height:84px;background:#f4f4f5"></div>
<div class="t" style="left:2275.0px;top:608.6px;font-size:26.5px;color:#3d3e44;font-weight:400;">Access rights</div>
<div class="t" style="left:2275.6px;top:697.2px;font-size:29.5px;color:#0e0e0f;font-weight:400;">Admin</div>
<div class="a" style="left:2369px;top:690px;width:78px;height:47px;background:#eef5fe;border:1.5px solid #b9d8f7;border-radius:8px;box-sizing:border-box;"></div>
<div class="t" style="left:2381.8px;top:702.7px;font-size:23px;color:#1e62d0;font-weight:400;">ORG</div>
<div class="a" style="left:2220px;top:760px;width:274px;height:2px;background:#e3e3e5"></div>
<div class="t" style="left:2275.6px;top:793.2px;font-size:29.5px;color:#0e0e0f;font-weight:400;">Admin</div>
<div class="a" style="left:2369px;top:786px;width:78px;height:47px;background:#eef5fe;border:1.5px solid #b9d8f7;border-radius:8px;box-sizing:border-box;"></div>
<div class="t" style="left:2381.8px;top:798.7px;font-size:23px;color:#1e62d0;font-weight:400;">ORG</div>
<div class="a" style="left:2220px;top:856px;width:274px;height:2px;background:#e3e3e5"></div>
<div class="t" style="left:2275.6px;top:889.2px;font-size:29.5px;color:#0e0e0f;font-weight:400;">Admin</div>
<div class="a" style="left:2369px;top:882px;width:78px;height:47px;background:#eef5fe;border:1.5px solid #b9d8f7;border-radius:8px;box-sizing:border-box;"></div>
<div class="t" style="left:2381.8px;top:894.7px;font-size:23px;color:#1e62d0;font-weight:400;">ORG</div>
<div class="a" style="left:2220px;top:952px;width:274px;height:2px;background:#e3e3e5"></div>
<div class="t" style="left:2275.6px;top:985.2px;font-size:29.5px;color:#0e0e0f;font-weight:400;">Admin</div>
<div class="a" style="left:2369px;top:978px;width:78px;height:47px;background:#eef5fe;border:1.5px solid #b9d8f7;border-radius:8px;box-sizing:border-box;"></div>
<div class="t" style="left:2381.8px;top:990.7px;font-size:23px;color:#1e62d0;font-weight:400;">ORG</div>
<div class="a" style="left:2220px;top:1048px;width:274px;height:2px;background:#e3e3e5"></div>
<div class="t" style="left:2275.6px;top:1081.2px;font-size:29.5px;color:#0e0e0f;font-weight:400;">Admin</div>
<div class="a" style="left:2369px;top:1074px;width:78px;height:47px;background:#eef5fe;border:1.5px solid #b9d8f7;border-radius:8px;box-sizing:border-box;"></div>
<div class="t" style="left:2381.8px;top:1086.7px;font-size:23px;color:#1e62d0;font-weight:400;">ORG</div>
<div class="a" style="left:2220px;top:1144px;width:274px;height:2px;background:#e3e3e5"></div>
<div class="t" style="left:2275.6px;top:1177.2px;font-size:29.5px;color:#0e0e0f;font-weight:400;">Admin</div>
<div class="a" style="left:2369px;top:1170px;width:78px;height:47px;background:#eef5fe;border:1.5px solid #b9d8f7;border-radius:8px;box-sizing:border-box;"></div>
<div class="t" style="left:2381.8px;top:1182.7px;font-size:23px;color:#1e62d0;font-weight:400;">ORG</div>
<div class="a" style="left:2220px;top:1240px;width:274px;height:2px;background:#e3e3e5"></div>
<div class="t" style="left:2275.6px;top:1273.2px;font-size:29.5px;color:#0e0e0f;font-weight:400;">Admin</div>
<div class="a" style="left:2369px;top:1266px;width:78px;height:47px;background:#eef5fe;border:1.5px solid #b9d8f7;border-radius:8px;box-sizing:border-box;"></div>
<div class="t" style="left:2381.8px;top:1278.7px;font-size:23px;color:#1e62d0;font-weight:400;">ORG</div>
<div class="a" style="left:2220px;top:1336px;width:274px;height:2px;background:#e3e3e5"></div>
<div class="t" style="left:2275.6px;top:1369.2px;font-size:29.5px;color:#0e0e0f;font-weight:400;">Admin</div>
<div class="a" style="left:2369px;top:1362px;width:78px;height:47px;background:#eef5fe;border:1.5px solid #b9d8f7;border-radius:8px;box-sizing:border-box;"></div>
<div class="t" style="left:2381.8px;top:1374.7px;font-size:23px;color:#1e62d0;font-weight:400;">ORG</div>
<div class="a" style="left:2220px;top:1432px;width:274px;height:2px;background:#e3e3e5"></div>
<div class="t" style="left:2275.6px;top:1465.2px;font-size:29.5px;color:#0e0e0f;font-weight:400;">Admin</div>
<div class="a" style="left:2369px;top:1458px;width:78px;height:36px;background:#eef5fe;border:1.5px solid #b9d8f7;border-radius:8px 8px 0 0;box-sizing:border-box;border-bottom:none"></div>
<div class="t" style="left:2381.8px;top:1470.7px;font-size:23px;color:#1e62d0;font-weight:400;">ORG</div>
<div class="a" style="left:2220px;top:1494px;width:274px;height:2px;background:#e3e3e5"></div>
<div class="t" style="left:727.6px;top:82.3px;font-size:41px;color:#0e0e0f;font-weight:400;">User management</div>
<div class="a" style="left:2751px;top:70px;width:182px;height:64px;background:#2262b9;border-radius:9px"></div>
<div class="t" style="left:2776.0px;top:89.3px;font-size:28px;color:#c8c8c8;font-weight:400;">Invite user</div>
<div class="a" style="left:699px;top:204px;width:852px;height:374px;background:#ffffff;border-radius:7px;box-shadow:inset 0 0 0 6px #ffd92e"></div>
<div class="t" style="left:728.8px;top:228.7px;font-size:27.5px;color:#111113;font-weight:400;">Workshops</div>
<div class="a" style="left:729px;top:270px;width:307px;height:64px;border:2px solid #dedee1;border-radius:9px;box-sizing:border-box;background:#fff"></div>
<div class="t" style="left:753.5px;top:289.2px;font-size:26.5px;color:#8d9098;font-weight:400;">Select or search...</div>
<svg class="s" style="left:992px;top:295px" width="24" height="16" viewBox="0 0 24 16" ><path d="M3.8 4.3 L11 11.5 L18.2 4.3" fill="none" stroke="#8d9098" stroke-width="2.7" stroke-linecap="round" stroke-linejoin="round"/></svg>
<div class="t" style="left:1054.0px;top:229.6px;font-size:26.5px;color:#111113;font-weight:400;">Access rights</div>
<svg class="s" style="left:1215px;top:220px" width="50" height="50" viewBox="0 0 50 50" ><g fill="none" stroke="#3f4049" stroke-width="2.1" stroke-linecap="round" stroke-linejoin="round"><circle cx="25.9" cy="24.8" r="15.1"/><path d="M23.6 24.8 H25.8 V31 Q25.8 31.8 28.2 31.8"/></g><rect x="24.9" y="18.7" width="2.3" height="2.3" fill="#3f4049"/></svg>
<div class="a" style="left:1052px;top:269px;width:210px;height:66px;border-radius:10px;background:#d3e2fb"></div>
<div class="a" style="left:1053px;top:270px;width:208px;height:64px;border:2.2px solid #1f6feb;border-radius:9px;box-sizing:border-box;background:#fff"></div>
<div class="t" style="left:1080.0px;top:290.4px;font-size:26px;color:#8d9098;font-weight:400;">Select...</div>
<svg class="s" style="left:1216px;top:295px" width="24" height="16" viewBox="0 0 24 16" ><path d="M3.8 4.3 L11 11.5 L18.2 4.3" fill="none" stroke="#8d9098" stroke-width="2.7" stroke-linecap="round" stroke-linejoin="round"/></svg>
<div class="t" style="left:1276.0px;top:228.7px;font-size:27.5px;color:#111113;font-weight:400;">User type</div>
<svg class="s" style="left:1397.5px;top:220px" width="50" height="50" viewBox="0 0 50 50" ><g fill="none" stroke="#3f4049" stroke-width="2.1" stroke-linecap="round" stroke-linejoin="round"><circle cx="25.9" cy="24.8" r="15.1"/><path d="M23.6 24.8 H25.8 V31 Q25.8 31.8 28.2 31.8"/></g><rect x="24.9" y="18.7" width="2.3" height="2.3" fill="#3f4049"/></svg>
<div class="a" style="left:1277px;top:270px;width:220px;height:64px;border:2px solid #dedee1;border-radius:9px;box-sizing:border-box;background:#fff"></div>
<div class="t" style="left:1303.0px;top:288.9px;font-size:27px;color:#111113;font-weight:400;">2 selected</div>
<svg class="s" style="left:1452px;top:295px" width="24" height="16" viewBox="0 0 24 16" ><path d="M3.8 4.3 L11 11.5 L18.2 4.3" fill="none" stroke="#111113" stroke-width="3" stroke-linecap="round" stroke-linejoin="round"/></svg>
<div class="a" style="left:681px;top:446px;width:18px;height:2px;background:#b2b2b4"></div>
<div class="a" style="left:705px;top:446px;width:840px;height:2px;background:#e2e2e4"></div>
<div class="a" style="left:1551px;top:446px;width:1414px;height:2px;background:#b2b2b4"></div>
<div class="t" style="left:746.0px;top:401.1px;font-size:26.5px;color:#111113;font-weight:400;">Users</div>
<div class="a" style="left:837px;top:390px;width:65px;height:48px;background:#2b7de9;border-radius:24px"></div>
<div class="t" style="left:850.5px;top:402.8px;font-size:23.5px;color:#ffffff;font-weight:700;-webkit-text-stroke:0">155</div>
<div class="a" style="left:735px;top:445px;width:179px;height:4px;background:#2b7de9"></div>
<div class="t" style="left:936.8px;top:401.1px;font-size:26.5px;color:#6e6f73;font-weight:400;">Pending i</div>
<div class="a" style="left:729px;top:480px;width:371px;height:64px;border:2px solid #dedee1;border-radius:9px;box-sizing:border-box;background:#fff"></div>
<svg class="s" style="left:740px;top:485px" width="60" height="60" viewBox="0 0 60 60" ><g fill="none" stroke="#0e0e0f" stroke-width="2.4" stroke-linecap="round"><circle cx="23.6" cy="23.4" r="11.5"/><path d="M32 31.8 L41.8 41.6"/></g></svg>
<div class="t" style="left:801.5px;top:498.7px;font-size:28px;color:#8d9098;font-weight:400;">Search</div>
<div class="a" style="left:1054px;top:343px;width:357px;height:216px;background:#fff;border:1.5px solid #e2e2e4;border-radius:11px;box-sizing:border-box;box-shadow:0 4px 10px rgba(0,0,0,0.10)"></div>
<div class="a" style="left:1063px;top:352px;width:340px;height:66px;background:#f3f3f4;border-radius:9px"></div>
<div class="a" style="left:1080px;top:370px;width:30px;height:30px;border:2px solid #dcdcdf;border-radius:6px;box-sizing:border-box;background:#fff"></div>
<div class="t" style="left:1135.0px;top:371.2px;font-size:29px;color:#111113;font-weight:400;">Admin</div>
<div class="a" style="left:1080px;top:436px;width:30px;height:30px;border:2px solid #dcdcdf;border-radius:6px;box-sizing:border-box;background:#fff"></div>
<div class="t" style="left:1135.0px;top:438.0px;font-size:28px;color:#111113;font-weight:400;">Basic</div>
<div class="a" style="left:1080px;top:502px;width:30px;height:30px;border:2px solid #dcdcdf;border-radius:6px;box-sizing:border-box;background:#fff"></div>
<div class="t" style="left:1133.0px;top:503.5px;font-size:29px;color:#111113;font-weight:400;">Manager</div>
<svg class="s" style="left:0;top:0" width="3005" height="1558"><path d="M197.5,1315 A48,48 0 1 1 245.5,1363 C227.5,1363 215.5,1360.5 203.5,1361 C197.5,1361.5 195.5,1366 192.5,1365 C189.5,1364 190.5,1360 193.5,1354 C197.0,1347 197.5,1340 197.5,1315 Z" fill="#ffd92e"/></svg>
<div class="t" style="left:231.2px;top:1288.6px;font-size:52.5px;color:#000000;font-weight:400;width:28.6px;text-align:center;-webkit-text-stroke:0">1</div>
<svg class="s" style="left:0;top:0" width="3005" height="1558"><path d="M455.6,364 A48,48 0 1 1 503.6,412 C485.6,412 473.6,409.5 461.6,410 C455.6,410.5 453.6,415 450.6,414 C447.6,413 448.6,409 451.6,403 C455.1,396 455.6,389 455.6,364 Z" fill="#ffd92e"/></svg>
<div class="t" style="left:489.3px;top:337.6px;font-size:52.5px;color:#000000;font-weight:400;width:28.6px;text-align:center;-webkit-text-stroke:0">2</div>
<svg class="s" style="left:0;top:0" width="3005" height="1558"><path d="M1570.7,294.6 A48,48 0 1 1 1618.7,342.6 C1600.7,342.6 1588.7,340.1 1576.7,340.6 C1570.7,341.1 1568.7,345.6 1565.7,344.6 C1562.7,343.6 1563.7,339.6 1566.7,333.6 C1570.2,326.6 1570.7,319.6 1570.7,294.6 Z" fill="#ffd92e"/></svg>
<div class="t" style="left:1604.4px;top:268.2px;font-size:52.5px;color:#000000;font-weight:400;width:28.6px;text-align:center;-webkit-text-stroke:0">3</div>
</div></body></html>
